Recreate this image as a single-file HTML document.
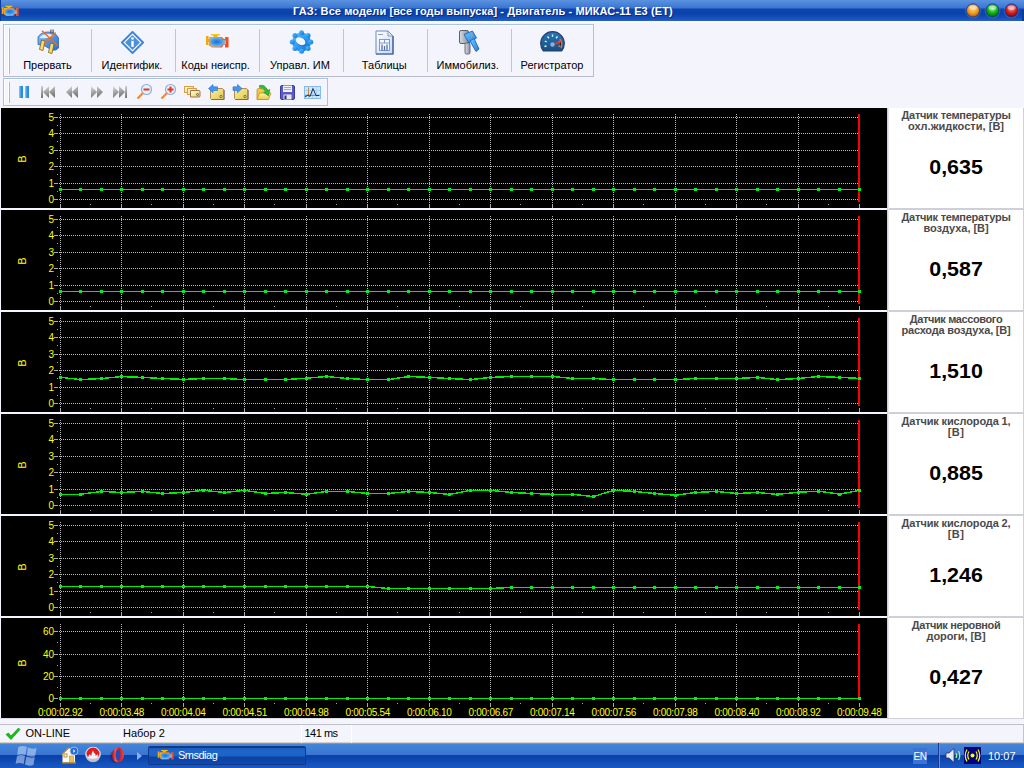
<!DOCTYPE html>
<html><head><meta charset="utf-8">
<style>
*{box-sizing:border-box}
html,body{margin:0;padding:0}
body{width:1024px;height:768px;overflow:hidden;position:relative;background:#f4f4fc;font-family:"Liberation Sans", sans-serif;font-size:11px;color:#000}
.abs{position:absolute}
#title{position:absolute;left:0;top:0;width:1024px;height:21px;background:linear-gradient(#5b92df 0px,#4a84da 4px,#3a74d2 8px,#0c45ad 9px,#0a43aa 14px,#1650bb 18px,#2a60c6 21px)}
#title .t{position:absolute;left:293px;top:5px;letter-spacing:0.1px;font-weight:bold;color:#fff;font-size:11px;white-space:nowrap;text-shadow:1px 1px 0 #0a2a80}
.tb{position:absolute;border:1px solid #a9c1e6;border-bottom-color:#b8bccb;background:#f4f4fc;box-shadow:inset 1px 1px 0 #fff}
.grip{position:absolute;width:2px;border-right:1px solid #b4b6c4;border-left:1px solid #fff}
.sep{position:absolute;width:1px;background:#c2c4d0;top:29px;height:43px}
.lbl{position:absolute;top:59px;height:13px;line-height:13px;white-space:nowrap;text-align:center;font-size:11px;color:#000}
.ico{position:absolute}
.vp{position:absolute;left:889px;width:134px;height:100px;background:#fff}
.vt{position:absolute;left:0;top:2px;width:134px;text-align:center;font-weight:bold;font-size:11px;line-height:11px;color:#4a4a4a}
.vv{position:absolute;left:0px;top:48px;width:134px;text-align:center;font-weight:bold;font-size:20px;line-height:22px;color:#000}
.vv span{display:inline-block;transform:scaleX(1.07)}
#status{position:absolute;left:0;top:724px;width:1024px;height:19px;border-top:1px solid #c0c0c8;border-bottom:1px solid #d6d0c4;background:#f4f4fc}
#task{position:absolute;left:0;top:743px;width:1024px;height:25px;background:linear-gradient(#6a9ae4 0px,#6a9ae4 1px,#4584da 1px,#3f7ed6 6px,#3a74d0 12px,#3670cc 12px,#0640aa 12px,#0a44ac 15px,#1450b8 20px,#1c58c2 25px)}
</style></head><body>
<div id="title">
  <div style="position:absolute;left:0;top:0;width:1px;height:22px;background:#0a3a9c"></div><div style="position:absolute;left:1022px;top:10px;width:2px;height:13px;background:#0a3a9c;border-bottom-left-radius:2px"></div>
  <svg class="abs" style="left:1px;top:5px" width="18" height="12" viewBox="0 0 24 16">
  <rect x="1" y="3" width="2.5" height="9" fill="#f0a818"/>
  <rect x="3" y="6" width="2" height="3" fill="#f0a018"/>
  <rect x="6" y="1" width="9" height="1.6" fill="#f8c818"/>
  <rect x="8.5" y="2" width="4" height="2.5" fill="#f8b018"/>
  <path d="M4 4 H17 L19 6 H20 V4 H23.5 V14.5 H20 V12 H18.5 L17 14.5 H7 L5 13 H4z" fill="url(#engg)"/>
  <path d="M5.5 5 H15.5 L17.5 7 L21 7.5 V11.5 H17.5 L15.5 13.5 H7.5 L5.5 12z" fill="url(#engb)"/>
</svg>
  <div class="t">ГАЗ: Все модели [все годы выпуска] - Двигатель - МИКАС-11 E3 (ET)</div>
  <svg class="abs" style="left:964px;top:1.5px" width="60" height="20">
    <defs>
      <radialGradient id="go" cx="50%" cy="35%" r="60%"><stop offset="0" stop-color="#ffd080"/><stop offset="0.6" stop-color="#f0a020"/><stop offset="1" stop-color="#c06000"/></radialGradient>
      <radialGradient id="gg" cx="50%" cy="35%" r="60%"><stop offset="0" stop-color="#a0f0a0"/><stop offset="0.6" stop-color="#10b010"/><stop offset="1" stop-color="#007000"/></radialGradient>
      <radialGradient id="gr" cx="50%" cy="35%" r="60%"><stop offset="0" stop-color="#f0a0a0"/><stop offset="0.6" stop-color="#d02020"/><stop offset="1" stop-color="#900000"/></radialGradient>
    </defs>
    <circle cx="9" cy="8.5" r="7.3" fill="none" stroke="#3c7ee0" stroke-width="0.8"/><circle cx="9" cy="8.5" r="6.6" fill="url(#go)" stroke="#1a3a9a" stroke-width="0.9"/><ellipse cx="9" cy="5.8" rx="4" ry="2.2" fill="#fff" opacity="0.45"/><circle cx="28.5" cy="8.5" r="7.3" fill="none" stroke="#3c7ee0" stroke-width="0.8"/><circle cx="28.5" cy="8.5" r="6.6" fill="url(#gg)" stroke="#1a3a9a" stroke-width="0.9"/><ellipse cx="28.5" cy="5.8" rx="4" ry="2.2" fill="#fff" opacity="0.45"/><circle cx="47.5" cy="8.5" r="7.3" fill="none" stroke="#3c7ee0" stroke-width="0.8"/><circle cx="47.5" cy="8.5" r="6.6" fill="url(#gr)" stroke="#1a3a9a" stroke-width="0.9"/><ellipse cx="47.5" cy="5.8" rx="4" ry="2.2" fill="#fff" opacity="0.45"/></svg>
</div>
<div style="position:absolute;left:0;top:21px;width:1024px;height:2px;background:#fbfbfe"></div>

<!-- toolbar 1 -->
<div class="tb" style="left:3px;top:24px;width:591px;height:53px"></div>
<div class="grip" style="left:8px;top:28px;height:46px"></div>
<div class="sep" style="left:91px"></div>
<div class="sep" style="left:175px"></div>
<div class="sep" style="left:259px"></div>
<div class="sep" style="left:343px"></div>
<div class="sep" style="left:427px"></div>
<div class="sep" style="left:511px"></div>
<div class="lbl" style="left:6.5px;width:82px">Прервать</div>
<div class="lbl" style="left:91.0px;width:82px">Идентифик.</div>
<div class="lbl" style="left:174.6px;width:82px">Коды неиспр.</div>
<div class="lbl" style="left:259.0px;width:82px">Управл. ИМ</div>
<div class="lbl" style="left:343.3px;width:82px">Таблицы</div>
<div class="lbl" style="left:426.7px;width:82px">Иммобилиз.</div>
<div class="lbl" style="left:511.0px;width:82px">Регистратор</div>

<svg class="ico" style="left:37px;top:29px" width="24" height="26" viewBox="0 0 24 26">
  <defs><linearGradient id="plugg" x1="0" y1="0" x2="1" y2="1"><stop offset="0" stop-color="#8cc8f8"/><stop offset="0.5" stop-color="#4a98e8"/><stop offset="1" stop-color="#2a70c8"/></linearGradient></defs>
  <path d="M1 8 Q4 3 11 3 Q19 3 21.5 9 V19 Q19 22 15 21 L7 16.5 L1 15.5z" fill="url(#plugg)" stroke="#2a64b0" stroke-width="0.8"/>
  <path d="M3 8 Q6 5 11 5 Q16 5 17 7 Q12 10 3 9z" fill="#dff0fc"/>
  <path d="M4.5 11 L8 12 L6 21.5 L2.5 20.5z" fill="#f4dc70" stroke="#806010" stroke-width="0.8"/>
  <path d="M13.5 14 L17 15 L15 24.5 L11.5 23.5z" fill="#f4dc70" stroke="#806010" stroke-width="0.8"/>
  <rect x="13.3" y="0.5" width="1.2" height="4" fill="#505058"/><rect x="15.5" y="0.5" width="1.2" height="4" fill="#505058"/>
  <path d="M5 1.8 L20.5 16.5 M18.6 3.5 L7 15" stroke="#ff6418" stroke-width="1.5"/>
</svg>
<svg class="ico" style="left:121px;top:31px" width="23" height="23" viewBox="0 0 23 23">
  <path d="M11.5 1 L22 11.5 L11.5 22 L1 11.5Z" fill="#fff" stroke="#3f86d8" stroke-width="2"/>
  <path d="M11.5 4 L19 11.5 L11.5 19 L4 11.5Z" fill="#4a90dc"/>
  <circle cx="11.5" cy="7.5" r="1.3" fill="#fff"/>
  <rect x="10.3" y="9.8" width="2.4" height="6" fill="#fff"/>
</svg>
<svg class="ico" style="left:205px;top:33px" width="24" height="16" viewBox="0 0 24 16">
  <defs><linearGradient id="engg" x1="0" y1="0" x2="1" y2="0.3"><stop offset="0" stop-color="#f8b018"/><stop offset="0.5" stop-color="#f88018"/><stop offset="1" stop-color="#f04818"/></linearGradient>
  <radialGradient id="engb" cx="40%" cy="45%" r="60%"><stop offset="0" stop-color="#2070c0"/><stop offset="0.5" stop-color="#3a98f0"/><stop offset="1" stop-color="#80c8ff"/></radialGradient></defs>
  <rect x="1" y="3" width="2.5" height="9" fill="#f0a818"/>
  <rect x="3" y="6" width="2" height="3" fill="#f0a018"/>
  <rect x="6" y="1" width="9" height="1.6" fill="#f8c818"/>
  <rect x="8.5" y="2" width="4" height="2.5" fill="#f8b018"/>
  <path d="M4 4 H17 L19 6 H20 V4 H23.5 V14.5 H20 V12 H18.5 L17 14.5 H7 L5 13 H4z" fill="url(#engg)"/>
  <path d="M5.5 5 H15.5 L17.5 7 L21 7.5 V11.5 H17.5 L15.5 13.5 H7.5 L5.5 12z" fill="url(#engb)"/>
</svg>
<svg class="ico" style="left:289px;top:30px" width="25" height="24" viewBox="0 0 25 24">
  <defs><linearGradient id="gearg" x1="0" y1="0" x2="1" y2="1"><stop offset="0" stop-color="#50c4ff"/><stop offset="0.6" stop-color="#2a94f0"/><stop offset="1" stop-color="#1468c8"/></linearGradient></defs>
  <g transform="translate(12.5 12)" fill="url(#gearg)"><circle r="9.4"/><circle cx="0.00" cy="-9.30" r="2.5"/><circle cx="6.58" cy="-6.58" r="2.5"/><circle cx="9.30" cy="-0.00" r="2.5"/><circle cx="6.58" cy="6.58" r="2.5"/><circle cx="0.00" cy="9.30" r="2.5"/><circle cx="-6.58" cy="6.58" r="2.5"/><circle cx="-9.30" cy="0.00" r="2.5"/><circle cx="-6.58" cy="-6.58" r="2.5"/></g>
  <ellipse cx="12.2" cy="11.8" rx="5.8" ry="4" fill="#1470d0" transform="rotate(28 12.2 11.8)"/>
  <ellipse cx="11.6" cy="11.2" rx="5.2" ry="3.5" fill="#f2f6fc" transform="rotate(28 11.6 11.2)"/>
</svg>
<svg class="ico" style="left:375px;top:30px" width="19" height="25" viewBox="0 0 19 25">
  <defs><linearGradient id="docg" x1="0" y1="0" x2="1" y2="1"><stop offset="0" stop-color="#ffffff"/><stop offset="1" stop-color="#c8d8f4"/></linearGradient></defs>
  <path d="M1 1h12l5 5v18H1z" fill="url(#docg)" stroke="#6a88c0" stroke-width="1"/>
  <path d="M18 6v18H1" fill="none" stroke="#3a5a9a" stroke-width="1.2"/>
  <path d="M13 1v5h5z" fill="#e0e8f8" stroke="#6a88c0" stroke-width="0.8"/>
  <rect x="4.5" y="9.5" width="10" height="11" fill="#f4f8ff" stroke="#7890c8" stroke-width="0.9"/>
  <path d="M4.5 13h10M9.5 9.5v3.5" stroke="#7890c8" stroke-width="0.9"/>
  <path d="M7 14.5v6M9.5 16v4.5M12 14.5v6" stroke="#5070b0" stroke-width="1.3"/>
  <rect x="3" y="4" width="5" height="1" fill="#90a0c0"/>
</svg>
<svg class="ico" style="left:457px;top:29px" width="23" height="26" viewBox="0 0 23 26">
  <defs><linearGradient id="kgr" x1="0" y1="0" x2="1" y2="0"><stop offset="0" stop-color="#d8dce4"/><stop offset="1" stop-color="#8c909c"/></linearGradient>
  <linearGradient id="kbl" x1="0" y1="0" x2="1" y2="1"><stop offset="0" stop-color="#70c8ff"/><stop offset="1" stop-color="#2080e0"/></linearGradient></defs>
  <rect x="2.5" y="1.5" width="9" height="13" rx="1.5" fill="url(#kgr)" stroke="#5c606c" stroke-width="1"/>
  <rect x="8" y="14" width="5" height="11" rx="1.5" fill="url(#kgr)" stroke="#5c606c" stroke-width="0.9"/>
  <path d="M7 5.5 L15.5 2 L19.5 9 L12 14z" fill="url(#kbl)" stroke="#1a64b8" stroke-width="0.9"/>
  <path d="M13 12 L17 9.5 L22 20 L19 22.5z" fill="url(#kbl)" stroke="#1a64b8" stroke-width="0.9"/>
  <path d="M13.5 3.5 Q16 5 14.5 9" fill="none" stroke="#d09090" stroke-width="0.9"/>
</svg>
<svg class="ico" style="left:540px;top:31px" width="26" height="22" viewBox="0 0 26 22">
  <defs><linearGradient id="spdg" x1="0" y1="0" x2="0" y2="1"><stop offset="0" stop-color="#2a78b8"/><stop offset="1" stop-color="#14507e"/></linearGradient></defs>
  <path d="M3.4 20 A11.8 11.8 0 1 1 21.6 20 Z" fill="url(#spdg)" stroke="#283c70" stroke-width="1.2"/>
  <g stroke="#e8f4ff" stroke-width="1.3">
    <path d="M4.5 15.5 L6.5 15"/><path d="M4.8 10 L6.8 11"/><path d="M7.5 5.5 L9 7.2"/><path d="M12.5 3.5 L12.5 5.8"/><path d="M17.5 5.5 L16 7.2"/>
  </g>
  <g stroke="#ff6a40" stroke-width="1.3"><path d="M20.2 10 L18.2 11"/><path d="M20.5 15.5 L18.5 15"/><path d="M19.8 8 A9 9 0 0 1 21 17"/></g>
  <path d="M12.5 13.5 L20.5 11" stroke="#ff3010" stroke-width="1.5"/>
  <circle cx="12.5" cy="13.5" r="2.2" fill="#98a8d8"/>
</svg>


<!-- toolbar 2 -->
<div class="tb" style="left:3px;top:78px;width:325px;height:28px"></div>
<div class="grip" style="left:8px;top:82px;height:21px"></div>

<svg class="ico" style="left:18px;top:85px" width="13" height="14"><rect x="1" y="1" width="4" height="12" fill="#2a8ae0"/><rect x="7" y="1" width="4" height="12" fill="#2a8ae0"/><rect x="1" y="1" width="1.5" height="12" fill="#6cc0ff"/><rect x="7" y="1" width="1.5" height="12" fill="#6cc0ff"/></svg>
<svg class="abs" width="0" height="0" style="left:0;top:0"><defs><linearGradient id="mg" x1="0" y1="0" x2="0.3" y2="1"><stop offset="0" stop-color="#e0e0e0"/><stop offset="0.5" stop-color="#a8a8a8"/><stop offset="1" stop-color="#787878"/></linearGradient></defs></svg>
<svg class="ico" style="left:40px;top:85px" width="16" height="14"><rect x="1" y="1" width="2" height="12" fill="url(#mg)"/><path d="M9 1v12l-6-6z M15 1v12l-6-6z" fill="url(#mg)"/></svg>
<svg class="ico" style="left:65px;top:85px" width="14" height="14"><path d="M7 1v12l-6-6z M13 1v12l-6-6z" fill="url(#mg)"/></svg>
<svg class="ico" style="left:90px;top:85px" width="14" height="14"><path d="M1 1v12l6-6z M7 1v12l6-6z" fill="url(#mg)"/></svg>
<svg class="ico" style="left:112px;top:85px" width="16" height="14"><path d="M1 1v12l6-6z M7 1v12l6-6z" fill="url(#mg)"/><rect x="13" y="1" width="2" height="12" fill="url(#mg)"/></svg>
<svg class="ico" style="left:136px;top:83px" width="17" height="17"><circle cx="10.5" cy="6.5" r="5" fill="#e0f4ff" stroke="#90a8d8" stroke-width="1.1"/><rect x="7.5" y="5.5" width="6" height="2" fill="#f03020"/><path d="M7 10 L1.5 15.5" stroke="#f08838" stroke-width="2.2"/></svg>
<svg class="ico" style="left:160px;top:83px" width="17" height="17"><circle cx="10.5" cy="6.5" r="5" fill="#e0f4ff" stroke="#90a8d8" stroke-width="1.1"/><rect x="7.5" y="5.5" width="6" height="2" fill="#f03020"/><rect x="9.5" y="3.5" width="2" height="6" fill="#f03020"/><path d="M7 10 L1.5 15.5" stroke="#f08838" stroke-width="2.2"/></svg>
<svg class="ico" style="left:183px;top:85px" width="18" height="13" viewBox="0 0 18 13"><defs><linearGradient id="cardg" x1="0" y1="0" x2="1" y2="1"><stop offset="0" stop-color="#fff"/><stop offset="0.5" stop-color="#f4e890"/><stop offset="1" stop-color="#e8d060"/></linearGradient></defs><rect x="1.5" y="1.5" width="9" height="6" fill="url(#cardg)" stroke="#d8a048"/><rect x="4.5" y="3.5" width="9" height="6" fill="url(#cardg)" stroke="#d8a048"/><path d="M7.5 5.5h9l0.5 1v5l-1 0.5h-8.5z" fill="url(#cardg)" stroke="#a07050"/><circle cx="14.5" cy="9.5" r="1" fill="none" stroke="#404040" stroke-width="0.7"/></svg>
<svg class="ico" style="left:208px;top:84px" width="17" height="16" viewBox="0 0 17 16"><defs><linearGradient id="fldg" x1="0" y1="0" x2="1" y2="1"><stop offset="0" stop-color="#f8f0a0"/><stop offset="1" stop-color="#e0c850"/></linearGradient></defs><path d="M2.5 4.5h12l1.5 1.5v9.5h-12.5l-1-1z" fill="url(#fldg)" stroke="#b08048" stroke-width="0.9"/><path d="M16 6v9.5h-12.5" fill="none" stroke="#806080" stroke-width="1"/><circle cx="13" cy="12.5" r="1.2" fill="none" stroke="#505050" stroke-width="0.7"/><path d="M0.5 4.5 L5 0.5 V2.8 H9.5 V6.5 H5 V8.8z" fill="#3c98f0" stroke="#2a70d0" stroke-width="0.6"/></svg>
<svg class="ico" style="left:232px;top:84px" width="17" height="16" viewBox="0 0 17 16"><defs><linearGradient id="fldg2" x1="0" y1="0" x2="1" y2="1"><stop offset="0" stop-color="#f8f0a0"/><stop offset="1" stop-color="#e0c850"/></linearGradient></defs><path d="M2.5 4.5h12l1.5 1.5v9.5h-12.5l-1-1z" fill="url(#fldg2)" stroke="#b08048" stroke-width="0.9"/><path d="M16 6v9.5h-12.5" fill="none" stroke="#806080" stroke-width="1"/><circle cx="13" cy="12.5" r="1.2" fill="none" stroke="#505050" stroke-width="0.7"/><path d="M10 4.5 L5.5 0.5 V2.8 H1 V6.5 H5.5 V8.8z" fill="#3c98f0" stroke="#2a70d0" stroke-width="0.6"/></svg>
<svg class="ico" style="left:256px;top:84px" width="17" height="17" viewBox="0 0 17 17"><defs><linearGradient id="ofg" x1="0" y1="0" x2="0" y2="1"><stop offset="0" stop-color="#fff4b0"/><stop offset="1" stop-color="#f0c840"/></linearGradient></defs><path d="M1 6 Q1 4.5 2.5 4.5 H6 L7 5.5 H11.5 V15.5 H1z" fill="#f0c850" stroke="#c09020" stroke-width="0.8"/><path d="M1 15.5 L3.5 9 H15 L12.5 15.5z" fill="url(#ofg)" stroke="#c09020" stroke-width="0.8"/><path d="M3.5 1.5 Q9 0 11.5 6.5 L13.8 5.6 L12.6 12 L7.6 8.4 L9.6 7.6 Q8 3.6 3.5 3.6z" fill="#38b838" stroke="#1c8a1c" stroke-width="0.6"/></svg>
<svg class="ico" style="left:280px;top:85px" width="15" height="15" viewBox="0 0 15 15"><rect x="0.5" y="0.5" width="14" height="14" rx="1.5" fill="#5a5ac8" stroke="#3a3a98"/><rect x="3" y="0.5" width="9" height="6.5" fill="#f0f0f8"/><path d="M4 2.5h7M4 4.5h7" stroke="#a0a0b8" stroke-width="0.9"/><rect x="3.5" y="9.5" width="8" height="5" fill="#e8e8e0"/><rect x="4.5" y="10.5" width="2" height="3.5" fill="#2a2a90"/></svg>
<svg class="ico" style="left:303px;top:85px" width="18" height="15" viewBox="0 0 18 15"><rect x="1.5" y="1.5" width="16" height="12" fill="#cce6fc" stroke="#88bcf0"/><path d="M5.5 2v11M9.5 2v11M13.5 2v11M2 5.5h15M2 9.5h15" stroke="#a8d4f8" stroke-width="1"/><path d="M5.5 2.5v9M2 10.5h15" stroke="#c08840" stroke-width="1"/><path d="M2 12 L5 10 L7 11.5 L10 3.5 L13 10.5 L16 10.5" fill="none" stroke="#203050" stroke-width="1"/></svg>


<svg class="abs" style="left:0;top:0" width="1024" height="768" viewBox="0 0 1024 768" shape-rendering="crispEdges">
<rect x="887" y="108" width="137" height="611" fill="#cfcfdc"/><rect x="0" y="718" width="887" height="1" fill="#dcdce6"/><rect x="888" y="108" width="1" height="610" fill="#e6e6ee"/>
<rect x="1" y="108" width="886" height="100" fill="#000"/>
<line x1="59" y1="117.5" x2="858" y2="117.5" stroke="#b8b8b8" stroke-width="1" stroke-dasharray="1 1"/>
<line x1="54" y1="117.5" x2="58" y2="117.5" stroke="#a4a8b4" stroke-width="1"/>
<line x1="59" y1="133.5" x2="858" y2="133.5" stroke="#b8b8b8" stroke-width="1" stroke-dasharray="1 1"/>
<line x1="54" y1="133.5" x2="58" y2="133.5" stroke="#a4a8b4" stroke-width="1"/>
<line x1="59" y1="150.5" x2="858" y2="150.5" stroke="#b8b8b8" stroke-width="1" stroke-dasharray="1 1"/>
<line x1="54" y1="150.5" x2="58" y2="150.5" stroke="#a4a8b4" stroke-width="1"/>
<line x1="59" y1="166.5" x2="858" y2="166.5" stroke="#b8b8b8" stroke-width="1" stroke-dasharray="1 1"/>
<line x1="54" y1="166.5" x2="58" y2="166.5" stroke="#a4a8b4" stroke-width="1"/>
<line x1="59" y1="183.5" x2="858" y2="183.5" stroke="#b8b8b8" stroke-width="1" stroke-dasharray="1 1"/>
<line x1="54" y1="183.5" x2="58" y2="183.5" stroke="#a4a8b4" stroke-width="1"/>
<line x1="59" y1="199.5" x2="858" y2="199.5" stroke="#b8b8b8" stroke-width="1" stroke-dasharray="1 1"/>
<line x1="54" y1="199.5" x2="58" y2="199.5" stroke="#a4a8b4" stroke-width="1"/>
<line x1="60.5" y1="114" x2="60.5" y2="203" stroke="#b8b8b8" stroke-width="1" stroke-dasharray="1 1"/>
<line x1="60.5" y1="204" x2="60.5" y2="208" stroke="#a8a8a8" stroke-width="1"/>
<line x1="121.5" y1="114" x2="121.5" y2="203" stroke="#b8b8b8" stroke-width="1" stroke-dasharray="1 1"/>
<line x1="121.5" y1="204" x2="121.5" y2="208" stroke="#a8a8a8" stroke-width="1"/>
<line x1="183.5" y1="114" x2="183.5" y2="203" stroke="#b8b8b8" stroke-width="1" stroke-dasharray="1 1"/>
<line x1="183.5" y1="204" x2="183.5" y2="208" stroke="#a8a8a8" stroke-width="1"/>
<line x1="244.5" y1="114" x2="244.5" y2="203" stroke="#b8b8b8" stroke-width="1" stroke-dasharray="1 1"/>
<line x1="244.5" y1="204" x2="244.5" y2="208" stroke="#a8a8a8" stroke-width="1"/>
<line x1="306.5" y1="114" x2="306.5" y2="203" stroke="#b8b8b8" stroke-width="1" stroke-dasharray="1 1"/>
<line x1="306.5" y1="204" x2="306.5" y2="208" stroke="#a8a8a8" stroke-width="1"/>
<line x1="367.5" y1="114" x2="367.5" y2="203" stroke="#b8b8b8" stroke-width="1" stroke-dasharray="1 1"/>
<line x1="367.5" y1="204" x2="367.5" y2="208" stroke="#a8a8a8" stroke-width="1"/>
<line x1="429.5" y1="114" x2="429.5" y2="203" stroke="#b8b8b8" stroke-width="1" stroke-dasharray="1 1"/>
<line x1="429.5" y1="204" x2="429.5" y2="208" stroke="#a8a8a8" stroke-width="1"/>
<line x1="490.5" y1="114" x2="490.5" y2="203" stroke="#b8b8b8" stroke-width="1" stroke-dasharray="1 1"/>
<line x1="490.5" y1="204" x2="490.5" y2="208" stroke="#a8a8a8" stroke-width="1"/>
<line x1="552.5" y1="114" x2="552.5" y2="203" stroke="#b8b8b8" stroke-width="1" stroke-dasharray="1 1"/>
<line x1="552.5" y1="204" x2="552.5" y2="208" stroke="#a8a8a8" stroke-width="1"/>
<line x1="613.5" y1="114" x2="613.5" y2="203" stroke="#b8b8b8" stroke-width="1" stroke-dasharray="1 1"/>
<line x1="613.5" y1="204" x2="613.5" y2="208" stroke="#a8a8a8" stroke-width="1"/>
<line x1="675.5" y1="114" x2="675.5" y2="203" stroke="#b8b8b8" stroke-width="1" stroke-dasharray="1 1"/>
<line x1="675.5" y1="204" x2="675.5" y2="208" stroke="#a8a8a8" stroke-width="1"/>
<line x1="736.5" y1="114" x2="736.5" y2="203" stroke="#b8b8b8" stroke-width="1" stroke-dasharray="1 1"/>
<line x1="736.5" y1="204" x2="736.5" y2="208" stroke="#a8a8a8" stroke-width="1"/>
<line x1="798.5" y1="114" x2="798.5" y2="203" stroke="#b8b8b8" stroke-width="1" stroke-dasharray="1 1"/>
<line x1="798.5" y1="204" x2="798.5" y2="208" stroke="#a8a8a8" stroke-width="1"/>
<line x1="859.5" y1="204" x2="859.5" y2="208" stroke="#a8a8a8" stroke-width="1"/>
<rect x="57" y="125" width="1" height="1" fill="#a0a0a0"/>
<rect x="57" y="141" width="1" height="1" fill="#a0a0a0"/>
<rect x="57" y="158" width="1" height="1" fill="#a0a0a0"/>
<rect x="57" y="174" width="1" height="1" fill="#a0a0a0"/>
<rect x="57" y="191" width="1" height="1" fill="#a0a0a0"/>
<rect x="90" y="204" width="1" height="1" fill="#a0a0a0"/>
<rect x="151" y="204" width="1" height="1" fill="#a0a0a0"/>
<rect x="213" y="204" width="1" height="1" fill="#a0a0a0"/>
<rect x="274" y="204" width="1" height="1" fill="#a0a0a0"/>
<rect x="336" y="204" width="1" height="1" fill="#a0a0a0"/>
<rect x="397" y="204" width="1" height="1" fill="#a0a0a0"/>
<rect x="459" y="204" width="1" height="1" fill="#a0a0a0"/>
<rect x="520" y="204" width="1" height="1" fill="#a0a0a0"/>
<rect x="582" y="204" width="1" height="1" fill="#a0a0a0"/>
<rect x="643" y="204" width="1" height="1" fill="#a0a0a0"/>
<rect x="705" y="204" width="1" height="1" fill="#a0a0a0"/>
<rect x="766" y="204" width="1" height="1" fill="#a0a0a0"/>
<rect x="828" y="204" width="1" height="1" fill="#a0a0a0"/>
<text x="54" y="121" text-anchor="end" font-size="10" fill="#ffff00" font-family='"Liberation Sans", sans-serif'>5</text>
<text x="54" y="137" text-anchor="end" font-size="10" fill="#ffff00" font-family='"Liberation Sans", sans-serif'>4</text>
<text x="54" y="154" text-anchor="end" font-size="10" fill="#ffff00" font-family='"Liberation Sans", sans-serif'>3</text>
<text x="54" y="170" text-anchor="end" font-size="10" fill="#ffff00" font-family='"Liberation Sans", sans-serif'>2</text>
<text x="54" y="187" text-anchor="end" font-size="10" fill="#ffff00" font-family='"Liberation Sans", sans-serif'>1</text>
<text x="54" y="203" text-anchor="end" font-size="10" fill="#ffff00" font-family='"Liberation Sans", sans-serif'>0</text>
<text x="0" y="0" transform="translate(26,159) rotate(-90)" text-anchor="middle" font-size="11" fill="#ffff00" font-family='"Liberation Sans", sans-serif'>В</text>
<rect x="858" y="114" width="2" height="88" fill="#ff0000"/>
<polyline points="60.5,189.5 80.5,189.5 101.5,189.5 121.5,189.5 142.5,189.5 162.5,189.5 183.5,189.5 203.5,189.5 224.5,189.5 244.5,189.5 265.5,189.5 285.5,189.5 306.5,189.5 326.5,189.5 347.5,189.5 367.5,189.5 388.5,189.5 408.5,189.5 429.5,189.5 449.5,189.5 470.5,189.5 490.5,189.5 511.5,189.5 531.5,189.5 552.5,189.5 572.5,189.5 593.5,189.5 613.5,189.5 634.5,189.5 654.5,189.5 675.5,189.5 695.5,189.5 716.5,189.5 736.5,189.5 757.5,189.5 777.5,189.5 798.5,189.5 818.5,189.5 839.5,189.5 859.5,189.5" fill="none" stroke="#00ee00" stroke-width="1.4"/>
<rect x="59" y="188" width="3" height="3" fill="#00f020"/>
<rect x="79" y="188" width="3" height="3" fill="#00f020"/>
<rect x="100" y="188" width="3" height="3" fill="#00f020"/>
<rect x="120" y="188" width="3" height="3" fill="#00f020"/>
<rect x="141" y="188" width="3" height="3" fill="#00f020"/>
<rect x="161" y="188" width="3" height="3" fill="#00f020"/>
<rect x="182" y="188" width="3" height="3" fill="#00f020"/>
<rect x="202" y="188" width="3" height="3" fill="#00f020"/>
<rect x="223" y="188" width="3" height="3" fill="#00f020"/>
<rect x="243" y="188" width="3" height="3" fill="#00f020"/>
<rect x="264" y="188" width="3" height="3" fill="#00f020"/>
<rect x="284" y="188" width="3" height="3" fill="#00f020"/>
<rect x="305" y="188" width="3" height="3" fill="#00f020"/>
<rect x="325" y="188" width="3" height="3" fill="#00f020"/>
<rect x="346" y="188" width="3" height="3" fill="#00f020"/>
<rect x="366" y="188" width="3" height="3" fill="#00f020"/>
<rect x="387" y="188" width="3" height="3" fill="#00f020"/>
<rect x="407" y="188" width="3" height="3" fill="#00f020"/>
<rect x="428" y="188" width="3" height="3" fill="#00f020"/>
<rect x="448" y="188" width="3" height="3" fill="#00f020"/>
<rect x="469" y="188" width="3" height="3" fill="#00f020"/>
<rect x="489" y="188" width="3" height="3" fill="#00f020"/>
<rect x="510" y="188" width="3" height="3" fill="#00f020"/>
<rect x="530" y="188" width="3" height="3" fill="#00f020"/>
<rect x="551" y="188" width="3" height="3" fill="#00f020"/>
<rect x="571" y="188" width="3" height="3" fill="#00f020"/>
<rect x="592" y="188" width="3" height="3" fill="#00f020"/>
<rect x="612" y="188" width="3" height="3" fill="#00f020"/>
<rect x="633" y="188" width="3" height="3" fill="#00f020"/>
<rect x="653" y="188" width="3" height="3" fill="#00f020"/>
<rect x="674" y="188" width="3" height="3" fill="#00f020"/>
<rect x="694" y="188" width="3" height="3" fill="#00f020"/>
<rect x="715" y="188" width="3" height="3" fill="#00f020"/>
<rect x="735" y="188" width="3" height="3" fill="#00f020"/>
<rect x="756" y="188" width="3" height="3" fill="#00f020"/>
<rect x="776" y="188" width="3" height="3" fill="#00f020"/>
<rect x="797" y="188" width="3" height="3" fill="#00f020"/>
<rect x="817" y="188" width="3" height="3" fill="#00f020"/>
<rect x="838" y="188" width="3" height="3" fill="#00f020"/>
<rect x="858" y="188" width="3" height="3" fill="#00f020"/>
<rect x="1" y="210" width="886" height="100" fill="#000"/>
<line x1="59" y1="219.5" x2="858" y2="219.5" stroke="#b8b8b8" stroke-width="1" stroke-dasharray="1 1"/>
<line x1="54" y1="219.5" x2="58" y2="219.5" stroke="#a4a8b4" stroke-width="1"/>
<line x1="59" y1="235.5" x2="858" y2="235.5" stroke="#b8b8b8" stroke-width="1" stroke-dasharray="1 1"/>
<line x1="54" y1="235.5" x2="58" y2="235.5" stroke="#a4a8b4" stroke-width="1"/>
<line x1="59" y1="252.5" x2="858" y2="252.5" stroke="#b8b8b8" stroke-width="1" stroke-dasharray="1 1"/>
<line x1="54" y1="252.5" x2="58" y2="252.5" stroke="#a4a8b4" stroke-width="1"/>
<line x1="59" y1="268.5" x2="858" y2="268.5" stroke="#b8b8b8" stroke-width="1" stroke-dasharray="1 1"/>
<line x1="54" y1="268.5" x2="58" y2="268.5" stroke="#a4a8b4" stroke-width="1"/>
<line x1="59" y1="285.5" x2="858" y2="285.5" stroke="#b8b8b8" stroke-width="1" stroke-dasharray="1 1"/>
<line x1="54" y1="285.5" x2="58" y2="285.5" stroke="#a4a8b4" stroke-width="1"/>
<line x1="59" y1="301.5" x2="858" y2="301.5" stroke="#b8b8b8" stroke-width="1" stroke-dasharray="1 1"/>
<line x1="54" y1="301.5" x2="58" y2="301.5" stroke="#a4a8b4" stroke-width="1"/>
<line x1="60.5" y1="216" x2="60.5" y2="305" stroke="#b8b8b8" stroke-width="1" stroke-dasharray="1 1"/>
<line x1="60.5" y1="306" x2="60.5" y2="310" stroke="#a8a8a8" stroke-width="1"/>
<line x1="121.5" y1="216" x2="121.5" y2="305" stroke="#b8b8b8" stroke-width="1" stroke-dasharray="1 1"/>
<line x1="121.5" y1="306" x2="121.5" y2="310" stroke="#a8a8a8" stroke-width="1"/>
<line x1="183.5" y1="216" x2="183.5" y2="305" stroke="#b8b8b8" stroke-width="1" stroke-dasharray="1 1"/>
<line x1="183.5" y1="306" x2="183.5" y2="310" stroke="#a8a8a8" stroke-width="1"/>
<line x1="244.5" y1="216" x2="244.5" y2="305" stroke="#b8b8b8" stroke-width="1" stroke-dasharray="1 1"/>
<line x1="244.5" y1="306" x2="244.5" y2="310" stroke="#a8a8a8" stroke-width="1"/>
<line x1="306.5" y1="216" x2="306.5" y2="305" stroke="#b8b8b8" stroke-width="1" stroke-dasharray="1 1"/>
<line x1="306.5" y1="306" x2="306.5" y2="310" stroke="#a8a8a8" stroke-width="1"/>
<line x1="367.5" y1="216" x2="367.5" y2="305" stroke="#b8b8b8" stroke-width="1" stroke-dasharray="1 1"/>
<line x1="367.5" y1="306" x2="367.5" y2="310" stroke="#a8a8a8" stroke-width="1"/>
<line x1="429.5" y1="216" x2="429.5" y2="305" stroke="#b8b8b8" stroke-width="1" stroke-dasharray="1 1"/>
<line x1="429.5" y1="306" x2="429.5" y2="310" stroke="#a8a8a8" stroke-width="1"/>
<line x1="490.5" y1="216" x2="490.5" y2="305" stroke="#b8b8b8" stroke-width="1" stroke-dasharray="1 1"/>
<line x1="490.5" y1="306" x2="490.5" y2="310" stroke="#a8a8a8" stroke-width="1"/>
<line x1="552.5" y1="216" x2="552.5" y2="305" stroke="#b8b8b8" stroke-width="1" stroke-dasharray="1 1"/>
<line x1="552.5" y1="306" x2="552.5" y2="310" stroke="#a8a8a8" stroke-width="1"/>
<line x1="613.5" y1="216" x2="613.5" y2="305" stroke="#b8b8b8" stroke-width="1" stroke-dasharray="1 1"/>
<line x1="613.5" y1="306" x2="613.5" y2="310" stroke="#a8a8a8" stroke-width="1"/>
<line x1="675.5" y1="216" x2="675.5" y2="305" stroke="#b8b8b8" stroke-width="1" stroke-dasharray="1 1"/>
<line x1="675.5" y1="306" x2="675.5" y2="310" stroke="#a8a8a8" stroke-width="1"/>
<line x1="736.5" y1="216" x2="736.5" y2="305" stroke="#b8b8b8" stroke-width="1" stroke-dasharray="1 1"/>
<line x1="736.5" y1="306" x2="736.5" y2="310" stroke="#a8a8a8" stroke-width="1"/>
<line x1="798.5" y1="216" x2="798.5" y2="305" stroke="#b8b8b8" stroke-width="1" stroke-dasharray="1 1"/>
<line x1="798.5" y1="306" x2="798.5" y2="310" stroke="#a8a8a8" stroke-width="1"/>
<line x1="859.5" y1="306" x2="859.5" y2="310" stroke="#a8a8a8" stroke-width="1"/>
<rect x="57" y="227" width="1" height="1" fill="#a0a0a0"/>
<rect x="57" y="243" width="1" height="1" fill="#a0a0a0"/>
<rect x="57" y="260" width="1" height="1" fill="#a0a0a0"/>
<rect x="57" y="276" width="1" height="1" fill="#a0a0a0"/>
<rect x="57" y="293" width="1" height="1" fill="#a0a0a0"/>
<rect x="90" y="306" width="1" height="1" fill="#a0a0a0"/>
<rect x="151" y="306" width="1" height="1" fill="#a0a0a0"/>
<rect x="213" y="306" width="1" height="1" fill="#a0a0a0"/>
<rect x="274" y="306" width="1" height="1" fill="#a0a0a0"/>
<rect x="336" y="306" width="1" height="1" fill="#a0a0a0"/>
<rect x="397" y="306" width="1" height="1" fill="#a0a0a0"/>
<rect x="459" y="306" width="1" height="1" fill="#a0a0a0"/>
<rect x="520" y="306" width="1" height="1" fill="#a0a0a0"/>
<rect x="582" y="306" width="1" height="1" fill="#a0a0a0"/>
<rect x="643" y="306" width="1" height="1" fill="#a0a0a0"/>
<rect x="705" y="306" width="1" height="1" fill="#a0a0a0"/>
<rect x="766" y="306" width="1" height="1" fill="#a0a0a0"/>
<rect x="828" y="306" width="1" height="1" fill="#a0a0a0"/>
<text x="54" y="223" text-anchor="end" font-size="10" fill="#ffff00" font-family='"Liberation Sans", sans-serif'>5</text>
<text x="54" y="239" text-anchor="end" font-size="10" fill="#ffff00" font-family='"Liberation Sans", sans-serif'>4</text>
<text x="54" y="256" text-anchor="end" font-size="10" fill="#ffff00" font-family='"Liberation Sans", sans-serif'>3</text>
<text x="54" y="272" text-anchor="end" font-size="10" fill="#ffff00" font-family='"Liberation Sans", sans-serif'>2</text>
<text x="54" y="289" text-anchor="end" font-size="10" fill="#ffff00" font-family='"Liberation Sans", sans-serif'>1</text>
<text x="54" y="305" text-anchor="end" font-size="10" fill="#ffff00" font-family='"Liberation Sans", sans-serif'>0</text>
<text x="0" y="0" transform="translate(26,261) rotate(-90)" text-anchor="middle" font-size="11" fill="#ffff00" font-family='"Liberation Sans", sans-serif'>В</text>
<rect x="858" y="216" width="2" height="88" fill="#ff0000"/>
<polyline points="60.5,291.5 80.5,291.5 101.5,291.5 121.5,291.5 142.5,291.5 162.5,291.5 183.5,291.5 203.5,291.5 224.5,291.5 244.5,291.5 265.5,291.5 285.5,291.5 306.5,291.5 326.5,291.5 347.5,291.5 367.5,291.5 388.5,291.5 408.5,291.5 429.5,291.5 449.5,291.5 470.5,291.5 490.5,291.5 511.5,291.5 531.5,291.5 552.5,291.5 572.5,291.5 593.5,291.5 613.5,291.5 634.5,291.5 654.5,291.5 675.5,291.5 695.5,291.5 716.5,291.5 736.5,291.5 757.5,291.5 777.5,291.5 798.5,291.5 818.5,291.5 839.5,291.5 859.5,291.5" fill="none" stroke="#00ee00" stroke-width="1.4"/>
<rect x="59" y="290" width="3" height="3" fill="#00f020"/>
<rect x="79" y="290" width="3" height="3" fill="#00f020"/>
<rect x="100" y="290" width="3" height="3" fill="#00f020"/>
<rect x="120" y="290" width="3" height="3" fill="#00f020"/>
<rect x="141" y="290" width="3" height="3" fill="#00f020"/>
<rect x="161" y="290" width="3" height="3" fill="#00f020"/>
<rect x="182" y="290" width="3" height="3" fill="#00f020"/>
<rect x="202" y="290" width="3" height="3" fill="#00f020"/>
<rect x="223" y="290" width="3" height="3" fill="#00f020"/>
<rect x="243" y="290" width="3" height="3" fill="#00f020"/>
<rect x="264" y="290" width="3" height="3" fill="#00f020"/>
<rect x="284" y="290" width="3" height="3" fill="#00f020"/>
<rect x="305" y="290" width="3" height="3" fill="#00f020"/>
<rect x="325" y="290" width="3" height="3" fill="#00f020"/>
<rect x="346" y="290" width="3" height="3" fill="#00f020"/>
<rect x="366" y="290" width="3" height="3" fill="#00f020"/>
<rect x="387" y="290" width="3" height="3" fill="#00f020"/>
<rect x="407" y="290" width="3" height="3" fill="#00f020"/>
<rect x="428" y="290" width="3" height="3" fill="#00f020"/>
<rect x="448" y="290" width="3" height="3" fill="#00f020"/>
<rect x="469" y="290" width="3" height="3" fill="#00f020"/>
<rect x="489" y="290" width="3" height="3" fill="#00f020"/>
<rect x="510" y="290" width="3" height="3" fill="#00f020"/>
<rect x="530" y="290" width="3" height="3" fill="#00f020"/>
<rect x="551" y="290" width="3" height="3" fill="#00f020"/>
<rect x="571" y="290" width="3" height="3" fill="#00f020"/>
<rect x="592" y="290" width="3" height="3" fill="#00f020"/>
<rect x="612" y="290" width="3" height="3" fill="#00f020"/>
<rect x="633" y="290" width="3" height="3" fill="#00f020"/>
<rect x="653" y="290" width="3" height="3" fill="#00f020"/>
<rect x="674" y="290" width="3" height="3" fill="#00f020"/>
<rect x="694" y="290" width="3" height="3" fill="#00f020"/>
<rect x="715" y="290" width="3" height="3" fill="#00f020"/>
<rect x="735" y="290" width="3" height="3" fill="#00f020"/>
<rect x="756" y="290" width="3" height="3" fill="#00f020"/>
<rect x="776" y="290" width="3" height="3" fill="#00f020"/>
<rect x="797" y="290" width="3" height="3" fill="#00f020"/>
<rect x="817" y="290" width="3" height="3" fill="#00f020"/>
<rect x="838" y="290" width="3" height="3" fill="#00f020"/>
<rect x="858" y="290" width="3" height="3" fill="#00f020"/>
<rect x="1" y="312" width="886" height="100" fill="#000"/>
<line x1="59" y1="321.5" x2="858" y2="321.5" stroke="#b8b8b8" stroke-width="1" stroke-dasharray="1 1"/>
<line x1="54" y1="321.5" x2="58" y2="321.5" stroke="#a4a8b4" stroke-width="1"/>
<line x1="59" y1="337.5" x2="858" y2="337.5" stroke="#b8b8b8" stroke-width="1" stroke-dasharray="1 1"/>
<line x1="54" y1="337.5" x2="58" y2="337.5" stroke="#a4a8b4" stroke-width="1"/>
<line x1="59" y1="354.5" x2="858" y2="354.5" stroke="#b8b8b8" stroke-width="1" stroke-dasharray="1 1"/>
<line x1="54" y1="354.5" x2="58" y2="354.5" stroke="#a4a8b4" stroke-width="1"/>
<line x1="59" y1="370.5" x2="858" y2="370.5" stroke="#b8b8b8" stroke-width="1" stroke-dasharray="1 1"/>
<line x1="54" y1="370.5" x2="58" y2="370.5" stroke="#a4a8b4" stroke-width="1"/>
<line x1="59" y1="387.5" x2="858" y2="387.5" stroke="#b8b8b8" stroke-width="1" stroke-dasharray="1 1"/>
<line x1="54" y1="387.5" x2="58" y2="387.5" stroke="#a4a8b4" stroke-width="1"/>
<line x1="59" y1="403.5" x2="858" y2="403.5" stroke="#b8b8b8" stroke-width="1" stroke-dasharray="1 1"/>
<line x1="54" y1="403.5" x2="58" y2="403.5" stroke="#a4a8b4" stroke-width="1"/>
<line x1="60.5" y1="318" x2="60.5" y2="407" stroke="#b8b8b8" stroke-width="1" stroke-dasharray="1 1"/>
<line x1="60.5" y1="408" x2="60.5" y2="412" stroke="#a8a8a8" stroke-width="1"/>
<line x1="121.5" y1="318" x2="121.5" y2="407" stroke="#b8b8b8" stroke-width="1" stroke-dasharray="1 1"/>
<line x1="121.5" y1="408" x2="121.5" y2="412" stroke="#a8a8a8" stroke-width="1"/>
<line x1="183.5" y1="318" x2="183.5" y2="407" stroke="#b8b8b8" stroke-width="1" stroke-dasharray="1 1"/>
<line x1="183.5" y1="408" x2="183.5" y2="412" stroke="#a8a8a8" stroke-width="1"/>
<line x1="244.5" y1="318" x2="244.5" y2="407" stroke="#b8b8b8" stroke-width="1" stroke-dasharray="1 1"/>
<line x1="244.5" y1="408" x2="244.5" y2="412" stroke="#a8a8a8" stroke-width="1"/>
<line x1="306.5" y1="318" x2="306.5" y2="407" stroke="#b8b8b8" stroke-width="1" stroke-dasharray="1 1"/>
<line x1="306.5" y1="408" x2="306.5" y2="412" stroke="#a8a8a8" stroke-width="1"/>
<line x1="367.5" y1="318" x2="367.5" y2="407" stroke="#b8b8b8" stroke-width="1" stroke-dasharray="1 1"/>
<line x1="367.5" y1="408" x2="367.5" y2="412" stroke="#a8a8a8" stroke-width="1"/>
<line x1="429.5" y1="318" x2="429.5" y2="407" stroke="#b8b8b8" stroke-width="1" stroke-dasharray="1 1"/>
<line x1="429.5" y1="408" x2="429.5" y2="412" stroke="#a8a8a8" stroke-width="1"/>
<line x1="490.5" y1="318" x2="490.5" y2="407" stroke="#b8b8b8" stroke-width="1" stroke-dasharray="1 1"/>
<line x1="490.5" y1="408" x2="490.5" y2="412" stroke="#a8a8a8" stroke-width="1"/>
<line x1="552.5" y1="318" x2="552.5" y2="407" stroke="#b8b8b8" stroke-width="1" stroke-dasharray="1 1"/>
<line x1="552.5" y1="408" x2="552.5" y2="412" stroke="#a8a8a8" stroke-width="1"/>
<line x1="613.5" y1="318" x2="613.5" y2="407" stroke="#b8b8b8" stroke-width="1" stroke-dasharray="1 1"/>
<line x1="613.5" y1="408" x2="613.5" y2="412" stroke="#a8a8a8" stroke-width="1"/>
<line x1="675.5" y1="318" x2="675.5" y2="407" stroke="#b8b8b8" stroke-width="1" stroke-dasharray="1 1"/>
<line x1="675.5" y1="408" x2="675.5" y2="412" stroke="#a8a8a8" stroke-width="1"/>
<line x1="736.5" y1="318" x2="736.5" y2="407" stroke="#b8b8b8" stroke-width="1" stroke-dasharray="1 1"/>
<line x1="736.5" y1="408" x2="736.5" y2="412" stroke="#a8a8a8" stroke-width="1"/>
<line x1="798.5" y1="318" x2="798.5" y2="407" stroke="#b8b8b8" stroke-width="1" stroke-dasharray="1 1"/>
<line x1="798.5" y1="408" x2="798.5" y2="412" stroke="#a8a8a8" stroke-width="1"/>
<line x1="859.5" y1="408" x2="859.5" y2="412" stroke="#a8a8a8" stroke-width="1"/>
<rect x="57" y="329" width="1" height="1" fill="#a0a0a0"/>
<rect x="57" y="345" width="1" height="1" fill="#a0a0a0"/>
<rect x="57" y="362" width="1" height="1" fill="#a0a0a0"/>
<rect x="57" y="378" width="1" height="1" fill="#a0a0a0"/>
<rect x="57" y="395" width="1" height="1" fill="#a0a0a0"/>
<rect x="90" y="408" width="1" height="1" fill="#a0a0a0"/>
<rect x="151" y="408" width="1" height="1" fill="#a0a0a0"/>
<rect x="213" y="408" width="1" height="1" fill="#a0a0a0"/>
<rect x="274" y="408" width="1" height="1" fill="#a0a0a0"/>
<rect x="336" y="408" width="1" height="1" fill="#a0a0a0"/>
<rect x="397" y="408" width="1" height="1" fill="#a0a0a0"/>
<rect x="459" y="408" width="1" height="1" fill="#a0a0a0"/>
<rect x="520" y="408" width="1" height="1" fill="#a0a0a0"/>
<rect x="582" y="408" width="1" height="1" fill="#a0a0a0"/>
<rect x="643" y="408" width="1" height="1" fill="#a0a0a0"/>
<rect x="705" y="408" width="1" height="1" fill="#a0a0a0"/>
<rect x="766" y="408" width="1" height="1" fill="#a0a0a0"/>
<rect x="828" y="408" width="1" height="1" fill="#a0a0a0"/>
<text x="54" y="325" text-anchor="end" font-size="10" fill="#ffff00" font-family='"Liberation Sans", sans-serif'>5</text>
<text x="54" y="341" text-anchor="end" font-size="10" fill="#ffff00" font-family='"Liberation Sans", sans-serif'>4</text>
<text x="54" y="358" text-anchor="end" font-size="10" fill="#ffff00" font-family='"Liberation Sans", sans-serif'>3</text>
<text x="54" y="374" text-anchor="end" font-size="10" fill="#ffff00" font-family='"Liberation Sans", sans-serif'>2</text>
<text x="54" y="391" text-anchor="end" font-size="10" fill="#ffff00" font-family='"Liberation Sans", sans-serif'>1</text>
<text x="54" y="407" text-anchor="end" font-size="10" fill="#ffff00" font-family='"Liberation Sans", sans-serif'>0</text>
<text x="0" y="0" transform="translate(26,363) rotate(-90)" text-anchor="middle" font-size="11" fill="#ffff00" font-family='"Liberation Sans", sans-serif'>В</text>
<rect x="858" y="318" width="2" height="88" fill="#ff0000"/>
<polyline points="60.5,377.3 80.5,379.6 101.5,378.5 121.5,376.6 142.5,377.4 162.5,378.5 183.5,379.4 203.5,378.5 224.5,378.5 244.5,379.6 265.5,379.6 285.5,379.6 306.5,378.2 326.5,376.5 347.5,378.5 367.5,379.6 388.5,379.6 408.5,376.5 429.5,377.4 449.5,378.5 470.5,379.6 490.5,377.4 511.5,376.5 531.5,376.5 552.5,376.5 572.5,378.5 593.5,378.5 613.5,379.6 634.5,379.6 654.5,379.6 675.5,379.6 695.5,378.5 716.5,378.5 736.5,378.5 757.5,377.4 777.5,379.6 798.5,378.5 818.5,376.5 839.5,377.4 859.5,378.4" fill="none" stroke="#00ee00" stroke-width="1.4"/>
<rect x="59" y="376" width="3" height="3" fill="#00f020"/>
<rect x="79" y="378" width="3" height="3" fill="#00f020"/>
<rect x="100" y="377" width="3" height="3" fill="#00f020"/>
<rect x="120" y="375" width="3" height="3" fill="#00f020"/>
<rect x="141" y="376" width="3" height="3" fill="#00f020"/>
<rect x="161" y="377" width="3" height="3" fill="#00f020"/>
<rect x="182" y="378" width="3" height="3" fill="#00f020"/>
<rect x="202" y="377" width="3" height="3" fill="#00f020"/>
<rect x="223" y="377" width="3" height="3" fill="#00f020"/>
<rect x="243" y="378" width="3" height="3" fill="#00f020"/>
<rect x="264" y="378" width="3" height="3" fill="#00f020"/>
<rect x="284" y="378" width="3" height="3" fill="#00f020"/>
<rect x="305" y="377" width="3" height="3" fill="#00f020"/>
<rect x="325" y="375" width="3" height="3" fill="#00f020"/>
<rect x="346" y="377" width="3" height="3" fill="#00f020"/>
<rect x="366" y="378" width="3" height="3" fill="#00f020"/>
<rect x="387" y="378" width="3" height="3" fill="#00f020"/>
<rect x="407" y="375" width="3" height="3" fill="#00f020"/>
<rect x="428" y="376" width="3" height="3" fill="#00f020"/>
<rect x="448" y="377" width="3" height="3" fill="#00f020"/>
<rect x="469" y="378" width="3" height="3" fill="#00f020"/>
<rect x="489" y="376" width="3" height="3" fill="#00f020"/>
<rect x="510" y="375" width="3" height="3" fill="#00f020"/>
<rect x="530" y="375" width="3" height="3" fill="#00f020"/>
<rect x="551" y="375" width="3" height="3" fill="#00f020"/>
<rect x="571" y="377" width="3" height="3" fill="#00f020"/>
<rect x="592" y="377" width="3" height="3" fill="#00f020"/>
<rect x="612" y="378" width="3" height="3" fill="#00f020"/>
<rect x="633" y="378" width="3" height="3" fill="#00f020"/>
<rect x="653" y="378" width="3" height="3" fill="#00f020"/>
<rect x="674" y="378" width="3" height="3" fill="#00f020"/>
<rect x="694" y="377" width="3" height="3" fill="#00f020"/>
<rect x="715" y="377" width="3" height="3" fill="#00f020"/>
<rect x="735" y="377" width="3" height="3" fill="#00f020"/>
<rect x="756" y="376" width="3" height="3" fill="#00f020"/>
<rect x="776" y="378" width="3" height="3" fill="#00f020"/>
<rect x="797" y="377" width="3" height="3" fill="#00f020"/>
<rect x="817" y="375" width="3" height="3" fill="#00f020"/>
<rect x="838" y="376" width="3" height="3" fill="#00f020"/>
<rect x="858" y="377" width="3" height="3" fill="#00f020"/>
<rect x="1" y="414" width="886" height="100" fill="#000"/>
<line x1="59" y1="423.5" x2="858" y2="423.5" stroke="#b8b8b8" stroke-width="1" stroke-dasharray="1 1"/>
<line x1="54" y1="423.5" x2="58" y2="423.5" stroke="#a4a8b4" stroke-width="1"/>
<line x1="59" y1="439.5" x2="858" y2="439.5" stroke="#b8b8b8" stroke-width="1" stroke-dasharray="1 1"/>
<line x1="54" y1="439.5" x2="58" y2="439.5" stroke="#a4a8b4" stroke-width="1"/>
<line x1="59" y1="456.5" x2="858" y2="456.5" stroke="#b8b8b8" stroke-width="1" stroke-dasharray="1 1"/>
<line x1="54" y1="456.5" x2="58" y2="456.5" stroke="#a4a8b4" stroke-width="1"/>
<line x1="59" y1="472.5" x2="858" y2="472.5" stroke="#b8b8b8" stroke-width="1" stroke-dasharray="1 1"/>
<line x1="54" y1="472.5" x2="58" y2="472.5" stroke="#a4a8b4" stroke-width="1"/>
<line x1="59" y1="489.5" x2="858" y2="489.5" stroke="#b8b8b8" stroke-width="1" stroke-dasharray="1 1"/>
<line x1="54" y1="489.5" x2="58" y2="489.5" stroke="#a4a8b4" stroke-width="1"/>
<line x1="59" y1="505.5" x2="858" y2="505.5" stroke="#b8b8b8" stroke-width="1" stroke-dasharray="1 1"/>
<line x1="54" y1="505.5" x2="58" y2="505.5" stroke="#a4a8b4" stroke-width="1"/>
<line x1="60.5" y1="420" x2="60.5" y2="509" stroke="#b8b8b8" stroke-width="1" stroke-dasharray="1 1"/>
<line x1="60.5" y1="510" x2="60.5" y2="514" stroke="#a8a8a8" stroke-width="1"/>
<line x1="121.5" y1="420" x2="121.5" y2="509" stroke="#b8b8b8" stroke-width="1" stroke-dasharray="1 1"/>
<line x1="121.5" y1="510" x2="121.5" y2="514" stroke="#a8a8a8" stroke-width="1"/>
<line x1="183.5" y1="420" x2="183.5" y2="509" stroke="#b8b8b8" stroke-width="1" stroke-dasharray="1 1"/>
<line x1="183.5" y1="510" x2="183.5" y2="514" stroke="#a8a8a8" stroke-width="1"/>
<line x1="244.5" y1="420" x2="244.5" y2="509" stroke="#b8b8b8" stroke-width="1" stroke-dasharray="1 1"/>
<line x1="244.5" y1="510" x2="244.5" y2="514" stroke="#a8a8a8" stroke-width="1"/>
<line x1="306.5" y1="420" x2="306.5" y2="509" stroke="#b8b8b8" stroke-width="1" stroke-dasharray="1 1"/>
<line x1="306.5" y1="510" x2="306.5" y2="514" stroke="#a8a8a8" stroke-width="1"/>
<line x1="367.5" y1="420" x2="367.5" y2="509" stroke="#b8b8b8" stroke-width="1" stroke-dasharray="1 1"/>
<line x1="367.5" y1="510" x2="367.5" y2="514" stroke="#a8a8a8" stroke-width="1"/>
<line x1="429.5" y1="420" x2="429.5" y2="509" stroke="#b8b8b8" stroke-width="1" stroke-dasharray="1 1"/>
<line x1="429.5" y1="510" x2="429.5" y2="514" stroke="#a8a8a8" stroke-width="1"/>
<line x1="490.5" y1="420" x2="490.5" y2="509" stroke="#b8b8b8" stroke-width="1" stroke-dasharray="1 1"/>
<line x1="490.5" y1="510" x2="490.5" y2="514" stroke="#a8a8a8" stroke-width="1"/>
<line x1="552.5" y1="420" x2="552.5" y2="509" stroke="#b8b8b8" stroke-width="1" stroke-dasharray="1 1"/>
<line x1="552.5" y1="510" x2="552.5" y2="514" stroke="#a8a8a8" stroke-width="1"/>
<line x1="613.5" y1="420" x2="613.5" y2="509" stroke="#b8b8b8" stroke-width="1" stroke-dasharray="1 1"/>
<line x1="613.5" y1="510" x2="613.5" y2="514" stroke="#a8a8a8" stroke-width="1"/>
<line x1="675.5" y1="420" x2="675.5" y2="509" stroke="#b8b8b8" stroke-width="1" stroke-dasharray="1 1"/>
<line x1="675.5" y1="510" x2="675.5" y2="514" stroke="#a8a8a8" stroke-width="1"/>
<line x1="736.5" y1="420" x2="736.5" y2="509" stroke="#b8b8b8" stroke-width="1" stroke-dasharray="1 1"/>
<line x1="736.5" y1="510" x2="736.5" y2="514" stroke="#a8a8a8" stroke-width="1"/>
<line x1="798.5" y1="420" x2="798.5" y2="509" stroke="#b8b8b8" stroke-width="1" stroke-dasharray="1 1"/>
<line x1="798.5" y1="510" x2="798.5" y2="514" stroke="#a8a8a8" stroke-width="1"/>
<line x1="859.5" y1="510" x2="859.5" y2="514" stroke="#a8a8a8" stroke-width="1"/>
<rect x="57" y="431" width="1" height="1" fill="#a0a0a0"/>
<rect x="57" y="447" width="1" height="1" fill="#a0a0a0"/>
<rect x="57" y="464" width="1" height="1" fill="#a0a0a0"/>
<rect x="57" y="480" width="1" height="1" fill="#a0a0a0"/>
<rect x="57" y="497" width="1" height="1" fill="#a0a0a0"/>
<rect x="90" y="510" width="1" height="1" fill="#a0a0a0"/>
<rect x="151" y="510" width="1" height="1" fill="#a0a0a0"/>
<rect x="213" y="510" width="1" height="1" fill="#a0a0a0"/>
<rect x="274" y="510" width="1" height="1" fill="#a0a0a0"/>
<rect x="336" y="510" width="1" height="1" fill="#a0a0a0"/>
<rect x="397" y="510" width="1" height="1" fill="#a0a0a0"/>
<rect x="459" y="510" width="1" height="1" fill="#a0a0a0"/>
<rect x="520" y="510" width="1" height="1" fill="#a0a0a0"/>
<rect x="582" y="510" width="1" height="1" fill="#a0a0a0"/>
<rect x="643" y="510" width="1" height="1" fill="#a0a0a0"/>
<rect x="705" y="510" width="1" height="1" fill="#a0a0a0"/>
<rect x="766" y="510" width="1" height="1" fill="#a0a0a0"/>
<rect x="828" y="510" width="1" height="1" fill="#a0a0a0"/>
<text x="54" y="427" text-anchor="end" font-size="10" fill="#ffff00" font-family='"Liberation Sans", sans-serif'>5</text>
<text x="54" y="443" text-anchor="end" font-size="10" fill="#ffff00" font-family='"Liberation Sans", sans-serif'>4</text>
<text x="54" y="460" text-anchor="end" font-size="10" fill="#ffff00" font-family='"Liberation Sans", sans-serif'>3</text>
<text x="54" y="476" text-anchor="end" font-size="10" fill="#ffff00" font-family='"Liberation Sans", sans-serif'>2</text>
<text x="54" y="493" text-anchor="end" font-size="10" fill="#ffff00" font-family='"Liberation Sans", sans-serif'>1</text>
<text x="54" y="509" text-anchor="end" font-size="10" fill="#ffff00" font-family='"Liberation Sans", sans-serif'>0</text>
<text x="0" y="0" transform="translate(26,465) rotate(-90)" text-anchor="middle" font-size="11" fill="#ffff00" font-family='"Liberation Sans", sans-serif'>В</text>
<rect x="858" y="420" width="2" height="88" fill="#ff0000"/>
<polyline points="60.5,494.3 80.5,494.3 101.5,491.4 121.5,492.5 142.5,491.4 162.5,493.5 183.5,492.5 203.5,490.3 224.5,492.5 244.5,490.3 265.5,493.5 285.5,492.5 306.5,494.3 326.5,491.4 347.5,491.4 367.5,493.5 388.5,493.5 408.5,491.4 429.5,492.5 449.5,494.4 470.5,490.3 490.5,490.3 511.5,492.5 531.5,493.5 552.5,494.3 572.5,494.3 593.5,496.6 613.5,490.3 634.5,491.4 654.5,493.5 675.5,495.3 695.5,492.5 716.5,491.4 736.5,493.5 757.5,492.5 777.5,494.4 798.5,492.3 818.5,491.2 839.5,494.2 859.5,490.3" fill="none" stroke="#00ee00" stroke-width="1.4"/>
<rect x="59" y="493" width="3" height="3" fill="#00f020"/>
<rect x="79" y="493" width="3" height="3" fill="#00f020"/>
<rect x="100" y="490" width="3" height="3" fill="#00f020"/>
<rect x="120" y="491" width="3" height="3" fill="#00f020"/>
<rect x="141" y="490" width="3" height="3" fill="#00f020"/>
<rect x="161" y="492" width="3" height="3" fill="#00f020"/>
<rect x="182" y="491" width="3" height="3" fill="#00f020"/>
<rect x="202" y="489" width="3" height="3" fill="#00f020"/>
<rect x="223" y="491" width="3" height="3" fill="#00f020"/>
<rect x="243" y="489" width="3" height="3" fill="#00f020"/>
<rect x="264" y="492" width="3" height="3" fill="#00f020"/>
<rect x="284" y="491" width="3" height="3" fill="#00f020"/>
<rect x="305" y="493" width="3" height="3" fill="#00f020"/>
<rect x="325" y="490" width="3" height="3" fill="#00f020"/>
<rect x="346" y="490" width="3" height="3" fill="#00f020"/>
<rect x="366" y="492" width="3" height="3" fill="#00f020"/>
<rect x="387" y="492" width="3" height="3" fill="#00f020"/>
<rect x="407" y="490" width="3" height="3" fill="#00f020"/>
<rect x="428" y="491" width="3" height="3" fill="#00f020"/>
<rect x="448" y="493" width="3" height="3" fill="#00f020"/>
<rect x="469" y="489" width="3" height="3" fill="#00f020"/>
<rect x="489" y="489" width="3" height="3" fill="#00f020"/>
<rect x="510" y="491" width="3" height="3" fill="#00f020"/>
<rect x="530" y="492" width="3" height="3" fill="#00f020"/>
<rect x="551" y="493" width="3" height="3" fill="#00f020"/>
<rect x="571" y="493" width="3" height="3" fill="#00f020"/>
<rect x="592" y="495" width="3" height="3" fill="#00f020"/>
<rect x="612" y="489" width="3" height="3" fill="#00f020"/>
<rect x="633" y="490" width="3" height="3" fill="#00f020"/>
<rect x="653" y="492" width="3" height="3" fill="#00f020"/>
<rect x="674" y="494" width="3" height="3" fill="#00f020"/>
<rect x="694" y="491" width="3" height="3" fill="#00f020"/>
<rect x="715" y="490" width="3" height="3" fill="#00f020"/>
<rect x="735" y="492" width="3" height="3" fill="#00f020"/>
<rect x="756" y="491" width="3" height="3" fill="#00f020"/>
<rect x="776" y="493" width="3" height="3" fill="#00f020"/>
<rect x="797" y="491" width="3" height="3" fill="#00f020"/>
<rect x="817" y="490" width="3" height="3" fill="#00f020"/>
<rect x="838" y="493" width="3" height="3" fill="#00f020"/>
<rect x="858" y="489" width="3" height="3" fill="#00f020"/>
<rect x="1" y="516" width="886" height="100" fill="#000"/>
<line x1="59" y1="525.5" x2="858" y2="525.5" stroke="#b8b8b8" stroke-width="1" stroke-dasharray="1 1"/>
<line x1="54" y1="525.5" x2="58" y2="525.5" stroke="#a4a8b4" stroke-width="1"/>
<line x1="59" y1="541.5" x2="858" y2="541.5" stroke="#b8b8b8" stroke-width="1" stroke-dasharray="1 1"/>
<line x1="54" y1="541.5" x2="58" y2="541.5" stroke="#a4a8b4" stroke-width="1"/>
<line x1="59" y1="558.5" x2="858" y2="558.5" stroke="#b8b8b8" stroke-width="1" stroke-dasharray="1 1"/>
<line x1="54" y1="558.5" x2="58" y2="558.5" stroke="#a4a8b4" stroke-width="1"/>
<line x1="59" y1="574.5" x2="858" y2="574.5" stroke="#b8b8b8" stroke-width="1" stroke-dasharray="1 1"/>
<line x1="54" y1="574.5" x2="58" y2="574.5" stroke="#a4a8b4" stroke-width="1"/>
<line x1="59" y1="591.5" x2="858" y2="591.5" stroke="#b8b8b8" stroke-width="1" stroke-dasharray="1 1"/>
<line x1="54" y1="591.5" x2="58" y2="591.5" stroke="#a4a8b4" stroke-width="1"/>
<line x1="59" y1="607.5" x2="858" y2="607.5" stroke="#b8b8b8" stroke-width="1" stroke-dasharray="1 1"/>
<line x1="54" y1="607.5" x2="58" y2="607.5" stroke="#a4a8b4" stroke-width="1"/>
<line x1="60.5" y1="522" x2="60.5" y2="611" stroke="#b8b8b8" stroke-width="1" stroke-dasharray="1 1"/>
<line x1="60.5" y1="612" x2="60.5" y2="616" stroke="#a8a8a8" stroke-width="1"/>
<line x1="121.5" y1="522" x2="121.5" y2="611" stroke="#b8b8b8" stroke-width="1" stroke-dasharray="1 1"/>
<line x1="121.5" y1="612" x2="121.5" y2="616" stroke="#a8a8a8" stroke-width="1"/>
<line x1="183.5" y1="522" x2="183.5" y2="611" stroke="#b8b8b8" stroke-width="1" stroke-dasharray="1 1"/>
<line x1="183.5" y1="612" x2="183.5" y2="616" stroke="#a8a8a8" stroke-width="1"/>
<line x1="244.5" y1="522" x2="244.5" y2="611" stroke="#b8b8b8" stroke-width="1" stroke-dasharray="1 1"/>
<line x1="244.5" y1="612" x2="244.5" y2="616" stroke="#a8a8a8" stroke-width="1"/>
<line x1="306.5" y1="522" x2="306.5" y2="611" stroke="#b8b8b8" stroke-width="1" stroke-dasharray="1 1"/>
<line x1="306.5" y1="612" x2="306.5" y2="616" stroke="#a8a8a8" stroke-width="1"/>
<line x1="367.5" y1="522" x2="367.5" y2="611" stroke="#b8b8b8" stroke-width="1" stroke-dasharray="1 1"/>
<line x1="367.5" y1="612" x2="367.5" y2="616" stroke="#a8a8a8" stroke-width="1"/>
<line x1="429.5" y1="522" x2="429.5" y2="611" stroke="#b8b8b8" stroke-width="1" stroke-dasharray="1 1"/>
<line x1="429.5" y1="612" x2="429.5" y2="616" stroke="#a8a8a8" stroke-width="1"/>
<line x1="490.5" y1="522" x2="490.5" y2="611" stroke="#b8b8b8" stroke-width="1" stroke-dasharray="1 1"/>
<line x1="490.5" y1="612" x2="490.5" y2="616" stroke="#a8a8a8" stroke-width="1"/>
<line x1="552.5" y1="522" x2="552.5" y2="611" stroke="#b8b8b8" stroke-width="1" stroke-dasharray="1 1"/>
<line x1="552.5" y1="612" x2="552.5" y2="616" stroke="#a8a8a8" stroke-width="1"/>
<line x1="613.5" y1="522" x2="613.5" y2="611" stroke="#b8b8b8" stroke-width="1" stroke-dasharray="1 1"/>
<line x1="613.5" y1="612" x2="613.5" y2="616" stroke="#a8a8a8" stroke-width="1"/>
<line x1="675.5" y1="522" x2="675.5" y2="611" stroke="#b8b8b8" stroke-width="1" stroke-dasharray="1 1"/>
<line x1="675.5" y1="612" x2="675.5" y2="616" stroke="#a8a8a8" stroke-width="1"/>
<line x1="736.5" y1="522" x2="736.5" y2="611" stroke="#b8b8b8" stroke-width="1" stroke-dasharray="1 1"/>
<line x1="736.5" y1="612" x2="736.5" y2="616" stroke="#a8a8a8" stroke-width="1"/>
<line x1="798.5" y1="522" x2="798.5" y2="611" stroke="#b8b8b8" stroke-width="1" stroke-dasharray="1 1"/>
<line x1="798.5" y1="612" x2="798.5" y2="616" stroke="#a8a8a8" stroke-width="1"/>
<line x1="859.5" y1="612" x2="859.5" y2="616" stroke="#a8a8a8" stroke-width="1"/>
<rect x="57" y="533" width="1" height="1" fill="#a0a0a0"/>
<rect x="57" y="549" width="1" height="1" fill="#a0a0a0"/>
<rect x="57" y="566" width="1" height="1" fill="#a0a0a0"/>
<rect x="57" y="582" width="1" height="1" fill="#a0a0a0"/>
<rect x="57" y="599" width="1" height="1" fill="#a0a0a0"/>
<rect x="90" y="612" width="1" height="1" fill="#a0a0a0"/>
<rect x="151" y="612" width="1" height="1" fill="#a0a0a0"/>
<rect x="213" y="612" width="1" height="1" fill="#a0a0a0"/>
<rect x="274" y="612" width="1" height="1" fill="#a0a0a0"/>
<rect x="336" y="612" width="1" height="1" fill="#a0a0a0"/>
<rect x="397" y="612" width="1" height="1" fill="#a0a0a0"/>
<rect x="459" y="612" width="1" height="1" fill="#a0a0a0"/>
<rect x="520" y="612" width="1" height="1" fill="#a0a0a0"/>
<rect x="582" y="612" width="1" height="1" fill="#a0a0a0"/>
<rect x="643" y="612" width="1" height="1" fill="#a0a0a0"/>
<rect x="705" y="612" width="1" height="1" fill="#a0a0a0"/>
<rect x="766" y="612" width="1" height="1" fill="#a0a0a0"/>
<rect x="828" y="612" width="1" height="1" fill="#a0a0a0"/>
<text x="54" y="529" text-anchor="end" font-size="10" fill="#ffff00" font-family='"Liberation Sans", sans-serif'>5</text>
<text x="54" y="545" text-anchor="end" font-size="10" fill="#ffff00" font-family='"Liberation Sans", sans-serif'>4</text>
<text x="54" y="562" text-anchor="end" font-size="10" fill="#ffff00" font-family='"Liberation Sans", sans-serif'>3</text>
<text x="54" y="578" text-anchor="end" font-size="10" fill="#ffff00" font-family='"Liberation Sans", sans-serif'>2</text>
<text x="54" y="595" text-anchor="end" font-size="10" fill="#ffff00" font-family='"Liberation Sans", sans-serif'>1</text>
<text x="54" y="611" text-anchor="end" font-size="10" fill="#ffff00" font-family='"Liberation Sans", sans-serif'>0</text>
<text x="0" y="0" transform="translate(26,567) rotate(-90)" text-anchor="middle" font-size="11" fill="#ffff00" font-family='"Liberation Sans", sans-serif'>В</text>
<rect x="858" y="522" width="2" height="88" fill="#ff0000"/>
<polyline points="60.5,586.5 80.5,586.5 101.5,586.5 121.5,586.5 142.5,586.5 162.5,586.5 183.5,586.5 203.5,586.5 224.5,586.5 244.5,586.5 265.5,586.5 285.5,586.5 306.5,586.5 326.5,586.5 347.5,586.5 367.5,586.5 388.5,588.5 408.5,588.5 429.5,588.5 449.5,588.5 470.5,588.5 490.5,588.5 511.5,587.4 531.5,587.4 552.5,587.4 572.5,587.4 593.5,587.4 613.5,587.4 634.5,587.4 654.5,587.4 675.5,587.4 695.5,587.4 716.5,587.4 736.5,587.4 757.5,587.4 777.5,587.4 798.5,587.4 818.5,587.4 839.5,587.4 859.5,587.4" fill="none" stroke="#00ee00" stroke-width="1.4"/>
<rect x="59" y="585" width="3" height="3" fill="#00f020"/>
<rect x="79" y="585" width="3" height="3" fill="#00f020"/>
<rect x="100" y="585" width="3" height="3" fill="#00f020"/>
<rect x="120" y="585" width="3" height="3" fill="#00f020"/>
<rect x="141" y="585" width="3" height="3" fill="#00f020"/>
<rect x="161" y="585" width="3" height="3" fill="#00f020"/>
<rect x="182" y="585" width="3" height="3" fill="#00f020"/>
<rect x="202" y="585" width="3" height="3" fill="#00f020"/>
<rect x="223" y="585" width="3" height="3" fill="#00f020"/>
<rect x="243" y="585" width="3" height="3" fill="#00f020"/>
<rect x="264" y="585" width="3" height="3" fill="#00f020"/>
<rect x="284" y="585" width="3" height="3" fill="#00f020"/>
<rect x="305" y="585" width="3" height="3" fill="#00f020"/>
<rect x="325" y="585" width="3" height="3" fill="#00f020"/>
<rect x="346" y="585" width="3" height="3" fill="#00f020"/>
<rect x="366" y="585" width="3" height="3" fill="#00f020"/>
<rect x="387" y="587" width="3" height="3" fill="#00f020"/>
<rect x="407" y="587" width="3" height="3" fill="#00f020"/>
<rect x="428" y="587" width="3" height="3" fill="#00f020"/>
<rect x="448" y="587" width="3" height="3" fill="#00f020"/>
<rect x="469" y="587" width="3" height="3" fill="#00f020"/>
<rect x="489" y="587" width="3" height="3" fill="#00f020"/>
<rect x="510" y="586" width="3" height="3" fill="#00f020"/>
<rect x="530" y="586" width="3" height="3" fill="#00f020"/>
<rect x="551" y="586" width="3" height="3" fill="#00f020"/>
<rect x="571" y="586" width="3" height="3" fill="#00f020"/>
<rect x="592" y="586" width="3" height="3" fill="#00f020"/>
<rect x="612" y="586" width="3" height="3" fill="#00f020"/>
<rect x="633" y="586" width="3" height="3" fill="#00f020"/>
<rect x="653" y="586" width="3" height="3" fill="#00f020"/>
<rect x="674" y="586" width="3" height="3" fill="#00f020"/>
<rect x="694" y="586" width="3" height="3" fill="#00f020"/>
<rect x="715" y="586" width="3" height="3" fill="#00f020"/>
<rect x="735" y="586" width="3" height="3" fill="#00f020"/>
<rect x="756" y="586" width="3" height="3" fill="#00f020"/>
<rect x="776" y="586" width="3" height="3" fill="#00f020"/>
<rect x="797" y="586" width="3" height="3" fill="#00f020"/>
<rect x="817" y="586" width="3" height="3" fill="#00f020"/>
<rect x="838" y="586" width="3" height="3" fill="#00f020"/>
<rect x="858" y="586" width="3" height="3" fill="#00f020"/>
<rect x="1" y="618" width="886" height="100" fill="#000"/>
<line x1="59" y1="631.5" x2="858" y2="631.5" stroke="#b8b8b8" stroke-width="1" stroke-dasharray="1 1"/>
<line x1="54" y1="631.5" x2="58" y2="631.5" stroke="#a4a8b4" stroke-width="1"/>
<line x1="59" y1="654.5" x2="858" y2="654.5" stroke="#b8b8b8" stroke-width="1" stroke-dasharray="1 1"/>
<line x1="54" y1="654.5" x2="58" y2="654.5" stroke="#a4a8b4" stroke-width="1"/>
<line x1="59" y1="676.5" x2="858" y2="676.5" stroke="#b8b8b8" stroke-width="1" stroke-dasharray="1 1"/>
<line x1="54" y1="676.5" x2="58" y2="676.5" stroke="#a4a8b4" stroke-width="1"/>
<line x1="59" y1="698.5" x2="858" y2="698.5" stroke="#b8b8b8" stroke-width="1" stroke-dasharray="1 1"/>
<line x1="54" y1="698.5" x2="58" y2="698.5" stroke="#a4a8b4" stroke-width="1"/>
<line x1="60.5" y1="624" x2="60.5" y2="702" stroke="#b8b8b8" stroke-width="1" stroke-dasharray="1 1"/>
<line x1="60.5" y1="703" x2="60.5" y2="707" stroke="#a8a8a8" stroke-width="1"/>
<line x1="121.5" y1="624" x2="121.5" y2="702" stroke="#b8b8b8" stroke-width="1" stroke-dasharray="1 1"/>
<line x1="121.5" y1="703" x2="121.5" y2="707" stroke="#a8a8a8" stroke-width="1"/>
<line x1="183.5" y1="624" x2="183.5" y2="702" stroke="#b8b8b8" stroke-width="1" stroke-dasharray="1 1"/>
<line x1="183.5" y1="703" x2="183.5" y2="707" stroke="#a8a8a8" stroke-width="1"/>
<line x1="244.5" y1="624" x2="244.5" y2="702" stroke="#b8b8b8" stroke-width="1" stroke-dasharray="1 1"/>
<line x1="244.5" y1="703" x2="244.5" y2="707" stroke="#a8a8a8" stroke-width="1"/>
<line x1="306.5" y1="624" x2="306.5" y2="702" stroke="#b8b8b8" stroke-width="1" stroke-dasharray="1 1"/>
<line x1="306.5" y1="703" x2="306.5" y2="707" stroke="#a8a8a8" stroke-width="1"/>
<line x1="367.5" y1="624" x2="367.5" y2="702" stroke="#b8b8b8" stroke-width="1" stroke-dasharray="1 1"/>
<line x1="367.5" y1="703" x2="367.5" y2="707" stroke="#a8a8a8" stroke-width="1"/>
<line x1="429.5" y1="624" x2="429.5" y2="702" stroke="#b8b8b8" stroke-width="1" stroke-dasharray="1 1"/>
<line x1="429.5" y1="703" x2="429.5" y2="707" stroke="#a8a8a8" stroke-width="1"/>
<line x1="490.5" y1="624" x2="490.5" y2="702" stroke="#b8b8b8" stroke-width="1" stroke-dasharray="1 1"/>
<line x1="490.5" y1="703" x2="490.5" y2="707" stroke="#a8a8a8" stroke-width="1"/>
<line x1="552.5" y1="624" x2="552.5" y2="702" stroke="#b8b8b8" stroke-width="1" stroke-dasharray="1 1"/>
<line x1="552.5" y1="703" x2="552.5" y2="707" stroke="#a8a8a8" stroke-width="1"/>
<line x1="613.5" y1="624" x2="613.5" y2="702" stroke="#b8b8b8" stroke-width="1" stroke-dasharray="1 1"/>
<line x1="613.5" y1="703" x2="613.5" y2="707" stroke="#a8a8a8" stroke-width="1"/>
<line x1="675.5" y1="624" x2="675.5" y2="702" stroke="#b8b8b8" stroke-width="1" stroke-dasharray="1 1"/>
<line x1="675.5" y1="703" x2="675.5" y2="707" stroke="#a8a8a8" stroke-width="1"/>
<line x1="736.5" y1="624" x2="736.5" y2="702" stroke="#b8b8b8" stroke-width="1" stroke-dasharray="1 1"/>
<line x1="736.5" y1="703" x2="736.5" y2="707" stroke="#a8a8a8" stroke-width="1"/>
<line x1="798.5" y1="624" x2="798.5" y2="702" stroke="#b8b8b8" stroke-width="1" stroke-dasharray="1 1"/>
<line x1="798.5" y1="703" x2="798.5" y2="707" stroke="#a8a8a8" stroke-width="1"/>
<line x1="859.5" y1="703" x2="859.5" y2="707" stroke="#a8a8a8" stroke-width="1"/>
<rect x="57" y="642" width="1" height="1" fill="#a0a0a0"/>
<rect x="57" y="665" width="1" height="1" fill="#a0a0a0"/>
<rect x="57" y="687" width="1" height="1" fill="#a0a0a0"/>
<rect x="90" y="703" width="1" height="1" fill="#a0a0a0"/>
<rect x="151" y="703" width="1" height="1" fill="#a0a0a0"/>
<rect x="213" y="703" width="1" height="1" fill="#a0a0a0"/>
<rect x="274" y="703" width="1" height="1" fill="#a0a0a0"/>
<rect x="336" y="703" width="1" height="1" fill="#a0a0a0"/>
<rect x="397" y="703" width="1" height="1" fill="#a0a0a0"/>
<rect x="459" y="703" width="1" height="1" fill="#a0a0a0"/>
<rect x="520" y="703" width="1" height="1" fill="#a0a0a0"/>
<rect x="582" y="703" width="1" height="1" fill="#a0a0a0"/>
<rect x="643" y="703" width="1" height="1" fill="#a0a0a0"/>
<rect x="705" y="703" width="1" height="1" fill="#a0a0a0"/>
<rect x="766" y="703" width="1" height="1" fill="#a0a0a0"/>
<rect x="828" y="703" width="1" height="1" fill="#a0a0a0"/>
<text x="54" y="635" text-anchor="end" font-size="10" fill="#ffff00" font-family='"Liberation Sans", sans-serif'>60</text>
<text x="54" y="658" text-anchor="end" font-size="10" fill="#ffff00" font-family='"Liberation Sans", sans-serif'>40</text>
<text x="54" y="680" text-anchor="end" font-size="10" fill="#ffff00" font-family='"Liberation Sans", sans-serif'>20</text>
<text x="54" y="702" text-anchor="end" font-size="10" fill="#ffff00" font-family='"Liberation Sans", sans-serif'>0</text>
<text x="0" y="0" transform="translate(26,663) rotate(-90)" text-anchor="middle" font-size="11" fill="#ffff00" font-family='"Liberation Sans", sans-serif'>В</text>
<rect x="858" y="624" width="2" height="76" fill="#ff0000"/>
<polyline points="60.5,698.5 80.5,698.5 101.5,698.5 121.5,698.5 142.5,698.5 162.5,698.5 183.5,698.5 203.5,698.5 224.5,698.5 244.5,698.5 265.5,698.5 285.5,698.5 306.5,698.5 326.5,698.5 347.5,698.5 367.5,698.5 388.5,698.5 408.5,698.5 429.5,698.5 449.5,698.5 470.5,698.5 490.5,698.5 511.5,698.5 531.5,698.5 552.5,698.5 572.5,698.5 593.5,698.5 613.5,698.5 634.5,698.5 654.5,698.5 675.5,698.5 695.5,698.5 716.5,698.5 736.5,698.5 757.5,698.5 777.5,698.5 798.5,698.5 818.5,698.5 839.5,698.5 859.5,698.5" fill="none" stroke="#00ee00" stroke-width="1.4"/>
<rect x="59" y="697" width="3" height="3" fill="#00f020"/>
<rect x="79" y="697" width="3" height="3" fill="#00f020"/>
<rect x="100" y="697" width="3" height="3" fill="#00f020"/>
<rect x="120" y="697" width="3" height="3" fill="#00f020"/>
<rect x="141" y="697" width="3" height="3" fill="#00f020"/>
<rect x="161" y="697" width="3" height="3" fill="#00f020"/>
<rect x="182" y="697" width="3" height="3" fill="#00f020"/>
<rect x="202" y="697" width="3" height="3" fill="#00f020"/>
<rect x="223" y="697" width="3" height="3" fill="#00f020"/>
<rect x="243" y="697" width="3" height="3" fill="#00f020"/>
<rect x="264" y="697" width="3" height="3" fill="#00f020"/>
<rect x="284" y="697" width="3" height="3" fill="#00f020"/>
<rect x="305" y="697" width="3" height="3" fill="#00f020"/>
<rect x="325" y="697" width="3" height="3" fill="#00f020"/>
<rect x="346" y="697" width="3" height="3" fill="#00f020"/>
<rect x="366" y="697" width="3" height="3" fill="#00f020"/>
<rect x="387" y="697" width="3" height="3" fill="#00f020"/>
<rect x="407" y="697" width="3" height="3" fill="#00f020"/>
<rect x="428" y="697" width="3" height="3" fill="#00f020"/>
<rect x="448" y="697" width="3" height="3" fill="#00f020"/>
<rect x="469" y="697" width="3" height="3" fill="#00f020"/>
<rect x="489" y="697" width="3" height="3" fill="#00f020"/>
<rect x="510" y="697" width="3" height="3" fill="#00f020"/>
<rect x="530" y="697" width="3" height="3" fill="#00f020"/>
<rect x="551" y="697" width="3" height="3" fill="#00f020"/>
<rect x="571" y="697" width="3" height="3" fill="#00f020"/>
<rect x="592" y="697" width="3" height="3" fill="#00f020"/>
<rect x="612" y="697" width="3" height="3" fill="#00f020"/>
<rect x="633" y="697" width="3" height="3" fill="#00f020"/>
<rect x="653" y="697" width="3" height="3" fill="#00f020"/>
<rect x="674" y="697" width="3" height="3" fill="#00f020"/>
<rect x="694" y="697" width="3" height="3" fill="#00f020"/>
<rect x="715" y="697" width="3" height="3" fill="#00f020"/>
<rect x="735" y="697" width="3" height="3" fill="#00f020"/>
<rect x="756" y="697" width="3" height="3" fill="#00f020"/>
<rect x="776" y="697" width="3" height="3" fill="#00f020"/>
<rect x="797" y="697" width="3" height="3" fill="#00f020"/>
<rect x="817" y="697" width="3" height="3" fill="#00f020"/>
<rect x="838" y="697" width="3" height="3" fill="#00f020"/>
<rect x="858" y="697" width="3" height="3" fill="#00f020"/>
<text x="60.3" y="715.5" text-anchor="middle" font-size="10" letter-spacing="-0.25" fill="#ffff00" font-family='"Liberation Sans", sans-serif'>0:00:02.92</text>
<text x="121.8" y="715.5" text-anchor="middle" font-size="10" letter-spacing="-0.25" fill="#ffff00" font-family='"Liberation Sans", sans-serif'>0:00:03.48</text>
<text x="183.3" y="715.5" text-anchor="middle" font-size="10" letter-spacing="-0.25" fill="#ffff00" font-family='"Liberation Sans", sans-serif'>0:00:04.04</text>
<text x="244.8" y="715.5" text-anchor="middle" font-size="10" letter-spacing="-0.25" fill="#ffff00" font-family='"Liberation Sans", sans-serif'>0:00:04.51</text>
<text x="306.3" y="715.5" text-anchor="middle" font-size="10" letter-spacing="-0.25" fill="#ffff00" font-family='"Liberation Sans", sans-serif'>0:00:04.98</text>
<text x="367.8" y="715.5" text-anchor="middle" font-size="10" letter-spacing="-0.25" fill="#ffff00" font-family='"Liberation Sans", sans-serif'>0:00:05.54</text>
<text x="429.3" y="715.5" text-anchor="middle" font-size="10" letter-spacing="-0.25" fill="#ffff00" font-family='"Liberation Sans", sans-serif'>0:00:06.10</text>
<text x="490.8" y="715.5" text-anchor="middle" font-size="10" letter-spacing="-0.25" fill="#ffff00" font-family='"Liberation Sans", sans-serif'>0:00:06.67</text>
<text x="552.3" y="715.5" text-anchor="middle" font-size="10" letter-spacing="-0.25" fill="#ffff00" font-family='"Liberation Sans", sans-serif'>0:00:07.14</text>
<text x="613.8" y="715.5" text-anchor="middle" font-size="10" letter-spacing="-0.25" fill="#ffff00" font-family='"Liberation Sans", sans-serif'>0:00:07.56</text>
<text x="675.3" y="715.5" text-anchor="middle" font-size="10" letter-spacing="-0.25" fill="#ffff00" font-family='"Liberation Sans", sans-serif'>0:00:07.98</text>
<text x="736.8" y="715.5" text-anchor="middle" font-size="10" letter-spacing="-0.25" fill="#ffff00" font-family='"Liberation Sans", sans-serif'>0:00:08.40</text>
<text x="798.3" y="715.5" text-anchor="middle" font-size="10" letter-spacing="-0.25" fill="#ffff00" font-family='"Liberation Sans", sans-serif'>0:00:08.92</text>
<text x="859.3" y="715.5" text-anchor="middle" font-size="10" letter-spacing="-0.25" fill="#ffff00" font-family='"Liberation Sans", sans-serif'>0:00:09.48</text>
</svg>
<div class="vp" style="top:108px"><div class="vt"><div style="letter-spacing:-0.27px">Датчик температуры</div><div style="letter-spacing:0.02px">охл.жидкости, [В]</div></div><div class="vv"><span>0,635</span></div></div>
<div class="vp" style="top:210px"><div class="vt"><div style="letter-spacing:-0.27px">Датчик температуры</div><div style="letter-spacing:-0.05px">воздуха, [В]</div></div><div class="vv"><span>0,587</span></div></div>
<div class="vp" style="top:312px"><div class="vt"><div style="letter-spacing:-0.38px">Датчик массового</div><div style="letter-spacing:-0.20px">расхода воздуха, [В]</div></div><div class="vv"><span>1,510</span></div></div>
<div class="vp" style="top:414px"><div class="vt"><div style="letter-spacing:-0.14px">Датчик кислорода 1,</div><div style="letter-spacing:0.47px">[В]</div></div><div class="vv"><span>0,885</span></div></div>
<div class="vp" style="top:516px"><div class="vt"><div style="letter-spacing:-0.14px">Датчик кислорода 2,</div><div style="letter-spacing:0.47px">[В]</div></div><div class="vv"><span>1,246</span></div></div>
<div class="vp" style="top:618px"><div class="vt"><div style="letter-spacing:-0.37px">Датчик неровной</div><div style="letter-spacing:-0.08px">дороги, [В]</div></div><div class="vv"><span>0,427</span></div></div>

<div id="status">
  <div class="abs" style="left:121px;top:0;width:1px;height:18px;background:#fff"></div>
  <div class="abs" style="left:301px;top:0;width:1px;height:18px;background:#fff"></div>
  <div class="abs" style="left:351px;top:0;width:1px;height:18px;background:#fff"></div>
  <div class="abs" style="left:1023px;top:0;width:1px;height:18px;background:#c4c4c8"></div>
  <svg class="abs" style="left:5px;top:2px" width="16" height="14" viewBox="0 0 16 14"><path d="M1 7.5 L3.5 6 L6 9 L13.5 1 L15 2.5 L6 12.5 Z" fill="#10c010" stroke="#089008" stroke-width="0.6"/></svg>
  <div class="abs" style="left:25.5px;top:2px;line-height:13px">ON-LINE</div>
  <div class="abs" style="left:123px;top:2px;line-height:13px">Набор 2</div>
  <div class="abs" style="left:304.5px;top:2px;line-height:13px;letter-spacing:-0.5px">141 ms</div>
</div>

<div id="task">


<svg class="abs" style="left:15px;top:2px" width="26" height="22" viewBox="0 0 26 22" opacity="0.55" transform="scale(1.08 1)">
  <path d="M4 2 Q8 0 12 2 L10.5 10 Q7 8 3 10z" fill="#c8dcf8"/>
  <path d="M13 2.5 Q17 4.5 21 3 L19.5 11 Q16 12.5 11.8 10.5z" fill="#c8dcf8"/>
  <path d="M2.8 11 Q7 9 10.3 11 L9 19 Q5 17 1.5 19z" fill="#c8dcf8"/>
  <path d="M11.5 11.5 Q16 13.5 19.3 12 L18 20 Q14 21.5 10.2 19.5z" fill="#c8dcf8"/>
</svg>
<svg class="abs" style="left:61px;top:3px" width="18" height="18" viewBox="0 0 18 18">
  <path d="M1.5 8 L8 2 L14 7 V16.5 H1.5z" fill="#fbfbf6"/>
  <path d="M0.8 8.5 L8 1.5" stroke="#c08820" stroke-width="1.3"/>
  <rect x="3" y="8" width="3" height="3" fill="none" stroke="#c09040" stroke-width="1"/>
  <rect x="8.5" y="10" width="4" height="6.5" fill="#e8c060" stroke="#c09040" stroke-width="0.6"/>
  <rect x="1" y="16.2" width="14" height="1.4" fill="#c08820"/>
  <circle cx="13" cy="5" r="4" fill="#2a6ad8" stroke="#a8c0e0" stroke-width="0.9"/>
  <path d="M12.3 3 L14.3 5 L12.3 7z" fill="#e8f0ff"/>
</svg>
<svg class="abs" style="left:84px;top:3px" width="18" height="17" viewBox="0 0 18 17">
  <defs><linearGradient id="rcg" x1="0" y1="0" x2="0" y2="1"><stop offset="0" stop-color="#f0f0f4"/><stop offset="1" stop-color="#b8b8c0"/></linearGradient></defs>
  <circle cx="9" cy="8.5" r="7.8" fill="url(#rcg)"/>
  <path d="M2.5 8 A6.5 6.5 0 0 1 15.5 8 L14 11 Q9 9 4 11z" fill="#e01c1c"/>
  <path d="M4 12 Q4.5 9 6 8 Q6.5 10 7.5 9.5 Q7.5 6.5 9 4.5 Q9.8 7 11 7.5 Q12 8.5 11.5 10 Q13 9 13.5 8 Q14.5 10.5 13.5 12 Q9 13.5 4 12z" fill="#f4f4f8"/>
</svg>
<svg class="abs" style="left:108px;top:3px" width="18" height="19" viewBox="0 0 18 19">
  <defs><linearGradient id="opg" x1="0" y1="0" x2="1" y2="0"><stop offset="0" stop-color="#b01010"/><stop offset="0.3" stop-color="#ff5050"/><stop offset="0.6" stop-color="#d81818"/><stop offset="1" stop-color="#f04040"/></linearGradient></defs>
  <ellipse cx="7.5" cy="10.5" rx="5.5" ry="6.5" fill="#0a2060" opacity="0.45"/>
  <ellipse cx="10" cy="9" rx="6" ry="7.6" fill="url(#opg)"/>
  <ellipse cx="10" cy="9" rx="2.4" ry="5.6" fill="#1e4cb8"/>
</svg>
<svg class="abs" style="left:136px;top:8px" width="7" height="10"><path d="M1 1 L6 5 L1 9z" fill="#8ab0f0"/></svg>
<div class="abs" style="left:148px;top:3px;width:158px;height:19px;border-radius:2px;background:linear-gradient(#1c5cc0 0px,#1e66cc 3px,#1e62c6 8px,#0c42a4 9px,#0e46aa 14px,#1450b4 19px);border:1px solid #12388a;border-top:2px solid #123a88"></div>
<svg class="abs" style="left:157px;top:6px" width="17" height="12" viewBox="0 0 24 16">
  <rect x="1" y="3" width="2.5" height="9" fill="#f0a818"/>
  <rect x="3" y="6" width="2" height="3" fill="#f0a018"/>
  <rect x="6" y="1" width="9" height="1.6" fill="#f8c818"/>
  <rect x="8.5" y="2" width="4" height="2.5" fill="#f8b018"/>
  <path d="M4 4 H17 L19 6 H20 V4 H23.5 V14.5 H20 V12 H18.5 L17 14.5 H7 L5 13 H4z" fill="url(#engg)"/>
  <path d="M5.5 5 H15.5 L17.5 7 L21 7.5 V11.5 H17.5 L15.5 13.5 H7.5 L5.5 12z" fill="url(#engb)"/>
</svg>
<div class="abs" style="left:178px;top:6px;color:#fff;font-size:11px;line-height:13px;letter-spacing:-0.5px">Smsdiag</div>
<div class="abs" style="left:913px;top:5px;width:14px;height:16px;background:#3a72d6"></div>
<div class="abs" style="left:913.5px;top:7px;color:#fff;font-size:10px;line-height:13px;letter-spacing:-0.4px">EN</div>
<div class="abs" style="left:938px;top:0;width:1px;height:25px;background:#1a3a90"></div>
<div class="abs" style="left:939px;top:0;width:1px;height:25px;background:#5a90e8"></div>
<svg class="abs" style="left:945px;top:4px" width="18" height="17" viewBox="0 0 18 17">
  <path d="M1 6h3l5-4.5v14L4 11H1z" fill="#e8e8f0" stroke="#303060" stroke-width="0.8"/>
  <path d="M11 6 Q12.5 8.5 11 11 M13.5 4 Q16 8.5 13.5 13" fill="none" stroke="#a0f0a0" stroke-width="1.2"/>
</svg>
<div class="abs" style="left:964px;top:4px;width:17px;height:17px;background:#000080"></div>
<svg class="abs" style="left:964px;top:4px" width="17" height="17" viewBox="0 0 17 17">
  <circle cx="8.5" cy="8.5" r="2" fill="#ffff00"/>
  <path d="M5 4.5 Q2.5 8.5 5 12.5 M12 4.5 Q14.5 8.5 12 12.5 M3 2.5 Q-0.5 8.5 3 14.5 M14 2.5 Q17.5 8.5 14 14.5" fill="none" stroke="#ffff00" stroke-width="1.2"/>
</svg>
<div class="abs" style="left:988px;top:7px;color:#fff;font-size:11px;line-height:13px">10:07</div>

</div>
</body></html>
